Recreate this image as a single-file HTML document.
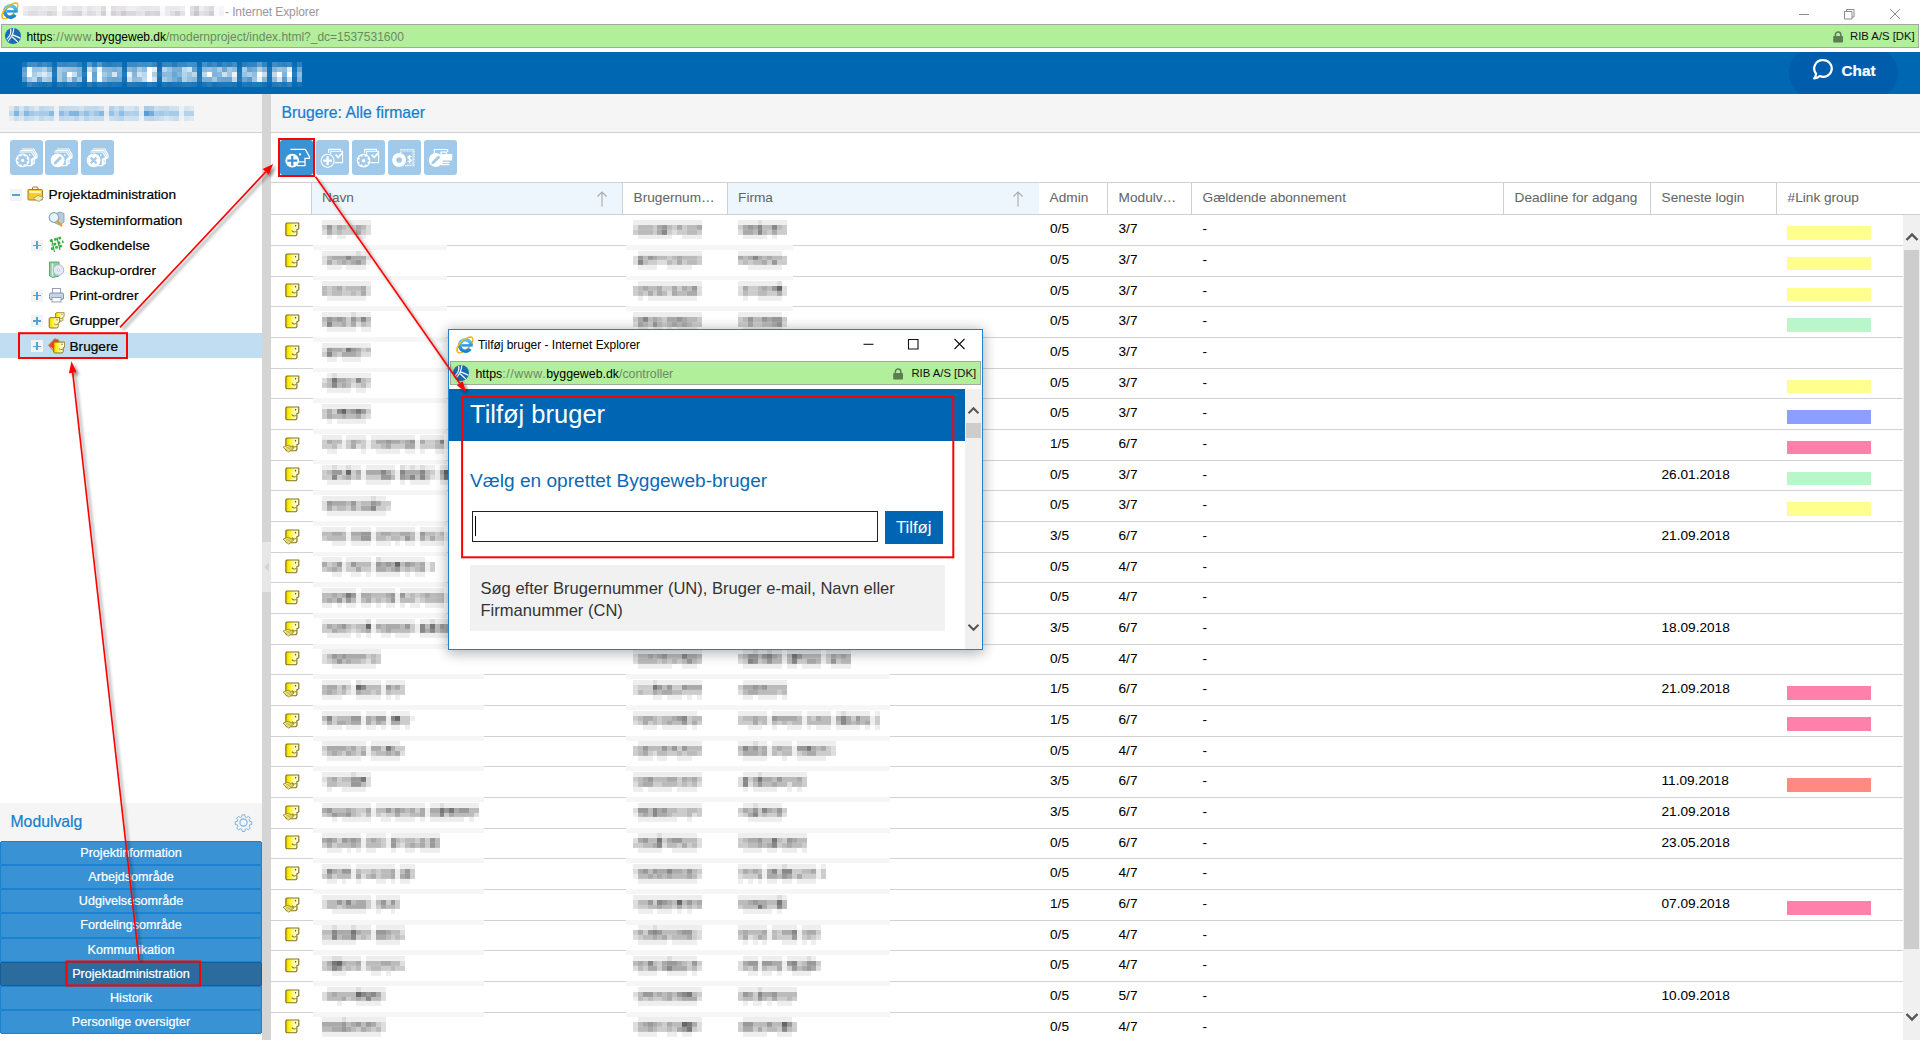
<!DOCTYPE html>
<html lang="da">
<head>
<meta charset="utf-8">
<title>Byggeweb - Brugere</title>
<style>
html,body{margin:0;padding:0;}
body{width:1920px;height:1040px;overflow:hidden;background:#fff;position:relative;font-family:"Liberation Sans",sans-serif;font-size:13.65px;color:#000;-webkit-text-stroke:.22px;}
div,span,i,svg{position:absolute;box-sizing:border-box;}
span{white-space:nowrap;}
.mz{filter:blur(.5px);}
/* ---------- IE chrome ---------- */
#tbar{left:0;top:0;width:1920px;height:24px;background:#fff;}
#tbar,#addr,#pop{-webkit-text-stroke:0;}
#rows,.gh{-webkit-text-stroke:.06px;}
#ttl{left:225px;top:3px;font-size:12px;line-height:18px;color:#9a969c;letter-spacing:-.1px;}
#addr{left:1px;top:24px;width:1918px;height:24px;background:#b1ef9b;border:1px solid #a3a8a0;}
.url{font-size:12px;line-height:16px;color:#6c8a62;}
.url b{font-weight:normal;color:#000;}
.url u{text-decoration:none;letter-spacing:.6px;}
#addr .url{left:24.400px;top:3.900px;}
.rib{font-size:11.3px;line-height:16px;color:#111;}
#addr .rib{left:1848px;top:3px;}
/* ---------- app header ---------- */
#hdr{left:0;top:52px;width:1920px;height:42px;background:#0067b2;overflow:hidden;}
#chat{left:1789px;top:-4px;width:109px;height:50px;border-radius:25px;background:#005dab;}
#chat span{left:52.5px;top:13px;font-size:15.3px;font-weight:bold;color:#fff;line-height:20px;}
/* ---------- left panel ---------- */
#lp{left:0;top:94px;width:262px;height:946px;background:#fff;}
.phd{left:0;top:0;height:39px;background:#f5f5f5;border-bottom:1px solid #d0d0d0;}
.ptt{font-size:15.75px;color:#157fcc;line-height:20px;}
.tb{width:33px;height:34.4px;top:46.3px;border-radius:3px;background:#a0c9ea;}
.tb svg{left:0;top:0;width:33.4px;height:34.4px;}
.tr{left:0;width:262px;height:25.2px;}
.tr span{top:4.6px;line-height:18px;}
.ex{width:11.6px;height:11.6px;background:#f3f3f3;top:7.4px;}
.ex:before{content:"";position:absolute;left:1.9px;top:5.2px;width:7.8px;height:1.25px;background:#4ba5d9;}
.ex.pl:after{content:"";position:absolute;left:5.2px;top:1.9px;width:1.25px;height:7.8px;background:#4ba5d9;}
.ti{width:17px;height:17px;top:4px;}
#mvh{left:0;top:709px;width:262px;height:38px;background:#f5f5f5;}
.mb{left:0;width:262px;height:24.15px;background:#3892d4;border:1px solid #1b82d1;border-radius:2px;color:#fff;text-align:center;line-height:22px;font-size:12.6px;}
.mb.sel{background:#2b6c9f;border-color:#125f99;}
/* ---------- splitter ---------- */
#spl{left:262px;top:94px;width:9px;height:946px;background:#d5d5d5;}
/* ---------- main ---------- */
#mp{left:271px;top:94px;width:1649px;height:946px;background:#fff;overflow:hidden;}
#mp .phd{width:1649px;}
.gh{top:88px;height:33px;border-top:1px solid #d0d0d0;border-bottom:1px solid #d0d0d0;left:0;width:1649px;background:#fff;}
.hc{top:0;height:31px;border-right:1px solid #d0d0d0;}
.hc span{left:10.6px;top:6px;line-height:18px;color:#666;}
.hc.s{background:#eef6fd;}
.row{left:0;width:1632px;height:30.67px;border-bottom:1px solid #d2d2d2;}
#rows{left:0;top:0;width:1632px;height:946px;}
#rows .row{margin-top:-94px;}
.ric{left:14px;top:6.5px;width:15px;height:15px;overflow:visible;}
.c{top:5px;line-height:18px;}
.lg{left:1516px;top:10.8px;width:84px;height:13.6px;}
.cv{top:29.6px;height:4.8px;background:#f6f6f6}
/* scrollbars */
.sbt{background:#f0f0f0;}
.sbh{background:#cdcdcd;}
/* ---------- popup ---------- */
#pop{left:448px;top:329px;width:535px;height:321px;background:#fff;border:1px solid #1883d7;box-shadow:0 1px 12px 1px rgba(0,0,0,.22),0 4px 14px rgba(0,0,0,.12);overflow:hidden;}
#pttl{left:29px;top:6px;font-size:11.95px;line-height:18px;color:#000;}
#paddr{left:.9px;top:31.4px;width:531px;height:23.6px;background:#b1ef9b;border:1px solid #a3a8a0;}
#paddr .url{left:24.600px;top:3.200px;font-size:12.35px;}
#paddr .rib{left:460.5px;top:3px;}
#pbh{left:0;top:58.7px;width:516px;height:52.3px;background:#0066b3;}
#pbh span{left:21px;top:9.6px;font-size:25.5px;line-height:32px;color:#fff;}
#psub{left:21px;top:138px;font-size:19.1px;line-height:26px;color:#0a69b5;}
#pin{left:23px;top:180.7px;width:405.5px;height:31px;border:1.5px solid #222;background:#fff;}
#pbtn{left:436px;top:180.7px;width:57.5px;height:33px;background:#0066b3;color:#fff;font-size:16.8px;line-height:33px;text-align:center;}
#phelp{left:21px;top:234.8px;width:475px;height:66px;background:#f1f1f1;}
#phelp span{left:10.5px;top:13.4px;font-size:16.55px;line-height:22px;color:#333;white-space:normal;width:450px;}
#psb{left:516px;top:58.7px;width:17px;height:262px;}
/* ---------- annotations ---------- */
#ann{left:0;top:0;width:1920px;height:1040px;pointer-events:none;}
</style>
</head>
<body>
<svg width="0" height="0" style="position:absolute">
<defs>
<linearGradient id="gy" x1="0" x2="1" y1="0" y2="0"><stop offset="0" stop-color="#f2c400"/><stop offset=".22" stop-color="#ffee00"/><stop offset=".62" stop-color="#fffcae"/><stop offset="1" stop-color="#fffff4"/></linearGradient>
<g id="usr">
<path d="M2 1.100H14.700V7.300L12.700 8.300V13.400L11.500 14.700H1.900L.9 13.700V2.100Z" fill="url(#gy)" stroke="#85741a" stroke-width="1.250" stroke-linejoin="round"/>
<rect x="10.600" y="3.100" width="1.300" height="1.700" fill="#6f6014"/>
<path d="M7.300 9.300Q9.300 11.700 12 10" fill="none" stroke="#8f7f22" stroke-width="1.150"/>
</g>
<g id="uadm">
<use href="#usr"/>
<path d="M-2.200 10.800 L3.400 8.800 L9.600 11.600 L4 16.200 Z" fill="#f4eb8a" stroke="#9a8a28" stroke-width=".9" stroke-linejoin="round"/>
<path d="M1 12 L5 10.2 M2.6 13 L6.6 11 M4 14 L8 12" stroke="#a39430" stroke-width=".7"/>
</g>
<g id="iee">
<ellipse cx="10" cy="11" rx="10.200" ry="4.300" transform="rotate(-44 10 11)" fill="none" stroke="#f0a800" stroke-width="1.200"/>
<path d="M15.100 14.700A5.700 5.700 0 1 1 16.100 11.300" fill="none" stroke="url(#ieg)" stroke-width="3.500"/>
<path d="M17.700 11.400H6.500" stroke="#2c9ade" stroke-width="2.500"/>
<path d="M2.600 17.600C.3 13.800 5.600 6.400 12 3.800 14.500 2.800 16.800 2.700 17.700 3.700" fill="none" stroke="#f7bc0a" stroke-width="1.350"/>
</g>
<linearGradient id="ieg" x1="0" y1="0" x2="0" y2="1"><stop offset="0" stop-color="#5cc3f2"/><stop offset="1" stop-color="#1a82c6"/></linearGradient>
<g id="bw">
<circle cx="8" cy="8" r="8" fill="#1a6cb5"/>
<path d="M5.600 .8C6.700 4.200 6 7.200 1.700 11.300M8.800 .3C8.600 4.600 7 8.800 2.900 13.400M7.600 6.900C10.200 7.600 12.800 9 15.400 10.200M7.100 8.700C9.200 10.400 11 12.200 12.800 14.200" fill="none" stroke="#fff" stroke-width="1.150"/>
</g>
<g id="lock"><path d="M2.4 5.2V3.6a2.7 2.7 0 0 1 5.4 0v1.6" fill="none" stroke="#5b7d51" stroke-width="1.5"/><rect x=".2" y="5" width="9.8" height="6.6" rx=".8" fill="#5b7d51"/></g>

<g id="heads" fill="none" stroke="#fff" stroke-width="1.15">
<path d="M12 9H23.8L27 14.600V17.600H24.200V23.500H22.600"/>
<path d="M10.400 10.500H22.600L25.800 15.600V18.400H22.800V24.600H21.400"/>
<path d="M9.200 12H21.400L24.600 16.600V19.400H21.400V25.600H16"/>
<path d="M19.800 14v2.200" stroke-width="1"/>
</g>
<g id="gear"><circle r="3.300" fill="none" stroke-width="2.300"/><path d="M0-5.600V5.600M-5.600 0H5.600M-4-4L4 4M-4 4L4-4" stroke-width="1.700"/></g>
<g id="icA"><use href="#heads"/><circle cx="12.600" cy="20.400" r="6.900" fill="#fff"/><g transform="translate(12.600,20.400)" stroke="#a0c9ea"><use href="#gear"/></g><circle cx="12.600" cy="20.400" r="1.700" fill="#fff"/></g>
<g id="icB"><use href="#heads"/><circle cx="12.600" cy="20.400" r="6.900" fill="#fff"/><path d="M8.700 24.400l.5-2.300 5.800-5.800 1.900 1.900-5.800 5.800z" fill="#a0c9ea"/></g>
<g id="icC"><use href="#heads"/><circle cx="12.600" cy="20.400" r="6.900" fill="#fff"/><path d="M9.700 17.500l5.800 5.800M15.500 17.500l-5.800 5.800" stroke="#a0c9ea" stroke-width="2.200"/></g>
<g id="icD"><path d="M10.400 9.400h15l4 7.200v1.700h-4.400v7.400h-8" fill="none" stroke="#fff" stroke-width="1.300"/><path d="M18.500 21.900h6.500" stroke="#fff" stroke-width="1.200"/><circle cx="20" cy="14.400" r="1.100" fill="#fff"/><circle cx="12.250" cy="20.700" r="6.900" fill="#fff"/><path d="M12.250 15.700v10M7.250 20.700h10" stroke="#3892d4" stroke-width="2.200"/></g>
<g id="docs" fill="none" stroke="#fff" stroke-width="1.100"><path d="M12.700 13v-3.600h11.900v1.900"/><path d="M14.700 14.500v-3.200h11.900v11.300h-8"/><path d="M19.600 14.700l2.500 2.700 4.300-4.600" stroke-width="1.700"/></g>
<g id="icE"><use href="#docs"/><circle cx="11.600" cy="20.700" r="6.500" fill="#a0c9ea" stroke="#fff" stroke-width="1.100"/><path d="M11.600 16.300v8.800M7.200 20.700h8.800" stroke="#fff" stroke-width="2.300"/></g>
<g id="icF"><use href="#docs"/><circle cx="11.600" cy="20.700" r="6.900" fill="#fff"/><g transform="translate(11.600,20.700)" stroke="#a0c9ea"><use href="#gear"/></g><circle cx="11.600" cy="20.700" r="1.700" fill="#fff"/></g>
<g id="icG"><path d="M12.900 13v-3.300h13v16h-9" fill="none" stroke="#fff" stroke-width="1.300" stroke-dasharray="1 .6"/><path d="M14.300 11.200h10.400v13h-6" fill="none" stroke="#fff" stroke-width=".8" opacity=".6"/><path d="M21.600 15v8.300M23.300 17c-.6-1-3.400-1-3.400.5s3.400 1.300 3.400 2.900-2.800 1.700-3.500.5" fill="none" stroke="#fff" stroke-width="1.200"/><circle cx="11.100" cy="20" r="4.900" fill="none" stroke="#fff" stroke-width="4.200"/></g>
<g id="icH"><path d="M10.300 13.500v-4h13.300v2.400" fill="none" stroke="#fff" stroke-width="1.200"/><path d="M16.400 11.400h6.700v2.700h5.100v6.500h-11.800z" fill="#fff"/><path d="M17.800 12.700h4v1.500h-4z" fill="#a0c9ea"/><path d="M17 22.500h8.500M17 24.700h8.500" stroke="#fff" stroke-width="1.300"/><circle cx="11.750" cy="20" r="7" fill="#fff"/><path d="M7.400 24.300l.6-2.500 6.300-6.300 2 2-6.300 6.300z" fill="#a0c9ea"/></g>
</defs>
</svg>

<!-- IE title bar -->
<div id="tbar">
<svg style="left:0;top:0;width:20px;height:20px" viewBox="0 0 20 20"><use href="#iee"/></svg>
<div class="mz " style="left:23px;top:6px;width:200.9px;height:9.8px;background:linear-gradient(90deg,#efeef1 0 4.9px,#e8e7ea 0 9.8px,#e6e5e8 0 14.7px,#e8e7ea 0 19.6px,#ebeaed 0 24.5px,#e8e7ea 0 29.4px,#e7e6e9 0 34.3px,#fff 0 39.2px,#e9e8eb 0 44.1px,#efeef0 0 49.0px,#e6e5e8 0 58.8px,#f1f0f2 0 63.7px,#e4e3e6 0 68.6px,#eae9ec 0 73.5px,#edecef 0 78.4px,#dddce0 0 83.3px,#fff 0 88.2px,#e0dee2 0 93.1px,#e6e5e8 0 98.0px,#e4e3e6 0 102.9px,#eeedf0 0 107.8px,#efeef0 0 112.7px,#eae9ec 0 117.6px,#e7e6e9 0 127.4px,#e9e8eb 0 137.2px,#fafafb 0 142.1px,#ebebed 0 147.0px,#e9e8eb 0 151.9px,#eae9ec 0 156.8px,#efeff1 0 161.7px,#fff 0 166.6px,#e0dfe3 0 171.5px,#d2d0d6 0 176.4px,#eeeef0 0 181.3px,#e4e3e6 0 186.2px,#dad9de 0 191.1px,#fafafb 0 196.0px,#f7f6f7 0 200.9px) 0 0.0px/100% 4.9px no-repeat,linear-gradient(90deg,#e8e7ea 0 4.9px,#dfdde2 0 14.7px,#e4e3e7 0 19.6px,#e3e2e6 0 24.5px,#d7d5da 0 29.4px,#dedde1 0 34.3px,#f8f7f8 0 39.2px,#e1e0e4 0 44.1px,#dfdde1 0 49.0px,#d8d6db 0 53.9px,#d4d2d8 0 58.8px,#eae9ec 0 63.7px,#dcdbdf 0 68.6px,#e0dfe3 0 73.5px,#e9e8eb 0 78.4px,#d2d0d6 0 83.3px,#f8f7f8 0 88.2px,#d3d1d7 0 93.1px,#dcdbdf 0 98.0px,#cdcad1 0 102.9px,#dad8dd 0 112.7px,#e1e0e4 0 117.6px,#e5e4e7 0 122.5px,#d4d2d7 0 127.4px,#d9d7dc 0 132.3px,#d6d4d9 0 137.2px,#f8f8f9 0 142.1px,#ebeaed 0 147.0px,#dedce1 0 151.9px,#d1cfd5 0 156.8px,#e3e2e6 0 161.7px,#fff 0 166.6px,#dddbe0 0 171.5px,#c8c5cd 0 176.4px,#e2e1e5 0 181.3px,#dcdbdf 0 186.2px,#ceccd3 0 191.1px,#f9f9fa 0 196.0px,#f2f1f3 0 200.9px) 0 4.9px/100% 4.9px no-repeat"></div>
<span id="ttl">- Internet Explorer</span>
<svg style="left:1790px;top:4px;width:120px;height:20px" viewBox="0 0 120 20"><g fill="none" stroke="#8c8c8c" stroke-width="1"><path d="M9 10.5h10"/><path d="M54.5 7.5h7.5v7.5h-7.5zM56.5 7.5v-2h7.5v7.5h-2"/><path d="M100 5l10 10M110 5l-10 10"/></g></svg>
</div>
<div id="addr">
<svg style="left:2.600px;top:3px;width:16px;height:16px" viewBox="0 0 16 16"><use href="#bw"/></svg>
<span class="url"><b>https</b><u>://www.</u><b>byggeweb.dk</b>/modernproject/index.html?_dc=1537531600</span>
<svg style="left:1830.5px;top:6.3px;width:10.2px;height:12px" viewBox="0 0 10.2 12"><use href="#lock"/></svg>
<span class="rib">RIB A/S [DK]</span>
</div>

<!-- app header -->
<div id="hdr">
<div id="chat">
<svg style="left:22px;top:9px;width:24px;height:26px" viewBox="0 0 24 26"><path d="M12.5 3.2a8.3 8.3 0 1 1-3.6 15.8c-1.4 1.3-3.3 2.3-5.8 2.5 1.3-1.5 1.9-3.1 2-4.8A8.3 8.3 0 0 1 12.5 3.2z" fill="none" stroke="#fff" stroke-width="2.2" stroke-linejoin="round"/></svg>
<span>Chat</span>
</div>
</div>
<div class="mz " style="left:22px;top:61.5px;width:280.0px;height:25.0px;background:linear-gradient(90deg,#1875b9 0 5.0px,#418ec6 0 10.0px,#428ec6 0 15.0px,#2f83c0 0 20.0px,#3f8dc5 0 25.0px,#3184c1 0 30.0px,#0b6eb5 0 35.0px,#3b8ac4 0 40.0px,#3586c2 0 45.0px,#3b8ac4 0 50.0px,#3a8ac4 0 55.0px,#287fbe 0 60.0px,#0c6eb6 0 65.0px,#579bcc 0 70.0px,#2980bf 0 75.0px,#569acc 0 80.0px,#2d82c0 0 85.0px,#257dbd 0 90.0px,#2d82c0 0 95.0px,#3184c1 0 100.0px,#076bb4 0 105.0px,#3d8bc4 0 110.0px,#3b8ac4 0 115.0px,#438fc6 0 120.0px,#418ec6 0 125.0px,#4791c7 0 130.0px,#3687c2 0 135.0px,#0b6db5 0 140.0px,#3285c1 0 145.0px,#3788c2 0 150.0px,#257dbd 0 155.0px,#3888c3 0 165.0px,#4590c7 0 170.0px,#3e8cc5 0 175.0px,#096cb5 0 180.0px,#4490c7 0 185.0px,#2e82c0 0 190.0px,#3b8ac4 0 195.0px,#247cbd 0 200.0px,#3788c3 0 205.0px,#2d82c0 0 210.0px,#418ec6 0 215.0px,#096cb5 0 220.0px,#297fbe 0 225.0px,#2f83c0 0 230.0px,#3285c1 0 235.0px,#5b9dcd 0 240.0px,#3084c1 0 245.0px,#076bb4 0 250.0px,#418ec6 0 255.0px,#3587c2 0 260.0px,#3083c0 0 265.0px,#3989c3 0 270.0px,#086cb5 0 275.0px,#2980be 0 280.0px) 0 0.0px/100% 5px no-repeat,linear-gradient(90deg,#5f9fcf 0 5.0px,#f3f8fb 0 10.0px,#9ac3e1 0 15.0px,#9bc4e1 0 20.0px,#afcfe7 0 25.0px,#7eb2d8 0 30.0px,#1c78ba 0 35.0px,#a8cbe5 0 40.0px,#9bc3e1 0 45.0px,#94bfdf 0 50.0px,#8ebcdd 0 55.0px,#7db2d8 0 60.0px,#1574b8 0 65.0px,#cee2f0 0 70.0px,#82b5d9 0 75.0px,#ebf3f9 0 80.0px,#86b7db 0 85.0px,#82b5d9 0 90.0px,#76aed6 0 95.0px,#84b6da 0 100.0px,#1674b9 0 105.0px,#8ab9dc 0 110.0px,#76add6 0 115.0px,#a6cae4 0 120.0px,#8fbddd 0 125.0px,#fff 0 130.0px,#dfecf5 0 135.0px,#1875b9 0 140.0px,#b6d3e9 0 145.0px,#99c2e0 0 150.0px,#77aed6 0 155.0px,#76aed6 0 160.0px,#bdd8eb 0 165.0px,#cfe3f1 0 170.0px,#64a2d0 0 175.0px,#1976ba 0 180.0px,#88b8db 0 185.0px,#94bfdf 0 190.0px,#84b6da 0 195.0px,#a8cbe5 0 200.0px,#6fa9d3 0 205.0px,#a3c8e3 0 210.0px,#8ebcdd 0 215.0px,#1473b8 0 220.0px,#a8cbe5 0 225.0px,#65a3d0 0 230.0px,#73acd5 0 235.0px,#b1d0e7 0 240.0px,#7fb3d8 0 245.0px,#1674b9 0 250.0px,#83b5d9 0 255.0px,#99c2e0 0 260.0px,#8fbcdd 0 265.0px,#dae9f4 0 270.0px,#1876b9 0 275.0px,#6da8d3 0 280.0px) 0 5.0px/100% 5px no-repeat,linear-gradient(90deg,#70aad4 0 5.0px,#fff 0 10.0px,#abcde6 0 15.0px,#c8deee 0 20.0px,#dae9f4 0 25.0px,#b8d5ea 0 30.0px,#207abc 0 35.0px,#a9cce5 0 40.0px,#80b3d9 0 45.0px,#fff 0 50.0px,#c7deee 0 55.0px,#7db2d8 0 60.0px,#287fbe 0 65.0px,#fff 0 70.0px,#64a3d0 0 75.0px,#fff 0 80.0px,#a5cae4 0 85.0px,#8abadc 0 90.0px,#d3e5f2 0 95.0px,#7cb1d8 0 100.0px,#207abc 0 105.0px,#e6f0f7 0 110.0px,#86b7da 0 115.0px,#d0e3f1 0 120.0px,#bad6ea 0 125.0px,#fff 0 130.0px,#adcee6 0 135.0px,#247dbd 0 140.0px,#8bbadc 0 145.0px,#8dbbdd 0 150.0px,#6aa6d2 0 155.0px,#82b4d9 0 160.0px,#b5d3e9 0 165.0px,#9ec5e2 0 170.0px,#bcd7eb 0 175.0px,#1976ba 0 180.0px,#bed8eb 0 185.0px,#fdfefe 0 190.0px,#80b3d9 0 195.0px,#88b8db 0 200.0px,#cce1f0 0 205.0px,#9fc6e2 0 210.0px,#e9f2f8 0 215.0px,#1d79bb 0 220.0px,#98c2e0 0 225.0px,#abcde6 0 230.0px,#93bfdf 0 235.0px,#fff 0 240.0px,#c5ddee 0 245.0px,#1b77ba 0 250.0px,#c0daec 0 255.0px,#fff 0 260.0px,#7fb3d8 0 265.0px,#fff 0 270.0px,#257dbd 0 275.0px,#90bddd 0 280.0px) 0 10.0px/100% 5px no-repeat,linear-gradient(90deg,#5298cb 0 5.0px,#a4c9e4 0 10.0px,#bdd8eb 0 15.0px,#64a3d0 0 20.0px,#aecfe7 0 25.0px,#a0c6e2 0 30.0px,#1775b9 0 35.0px,#a6cae4 0 40.0px,#7bb0d7 0 45.0px,#c0d9ec 0 50.0px,#6fa9d4 0 55.0px,#a1c7e3 0 60.0px,#1875b9 0 65.0px,#f8fbfd 0 70.0px,#6ba7d2 0 75.0px,#f9fcfd 0 80.0px,#8ab9dc 0 85.0px,#6fa9d4 0 90.0px,#68a5d1 0 95.0px,#6ca7d3 0 100.0px,#1473b8 0 105.0px,#cadfef 0 110.0px,#8ebcdd 0 115.0px,#95c0df 0 120.0px,#c5dced 0 125.0px,#fff 0 130.0px,#d3e5f2 0 135.0px,#1473b8 0 140.0px,#a7cbe4 0 145.0px,#92bede 0 150.0px,#73acd5 0 155.0px,#5e9fce 0 160.0px,#b0d0e7 0 165.0px,#96c0df 0 170.0px,#88b8db 0 175.0px,#1e79bb 0 180.0px,#7cb1d7 0 185.0px,#7bb1d7 0 190.0px,#a0c6e2 0 195.0px,#71aad4 0 200.0px,#69a6d2 0 205.0px,#67a4d1 0 210.0px,#c0d9ec 0 215.0px,#1d78bb 0 220.0px,#6ca7d3 0 225.0px,#579bcc 0 230.0px,#9ec5e2 0 235.0px,#e8f1f8 0 240.0px,#87b8db 0 245.0px,#1473b8 0 250.0px,#8fbcdd 0 255.0px,#d2e4f2 0 260.0px,#5d9ece 0 265.0px,#cae0ef 0 270.0px,#1373b8 0 275.0px,#81b4d9 0 280.0px) 0 15.0px/100% 5px no-repeat,linear-gradient(90deg,#0b6eb5 0 5.0px,#3285c1 0 10.0px,#227bbc 0 15.0px,#1b77ba 0 20.0px,#1573b8 0 25.0px,#1e79bb 0 30.0px,#056ab3 0 35.0px,#1c78ba 0 40.0px,#1373b8 0 45.0px,#207abc 0 50.0px,#217bbc 0 55.0px,#1372b8 0 60.0px,#066bb4 0 65.0px,#267ebd 0 70.0px,#1272b7 0 75.0px,#227bbc 0 80.0px,#1c78bb 0 85.0px,#1674b9 0 90.0px,#1c78ba 0 95.0px,#1976ba 0 100.0px,#056ab3 0 105.0px,#207abc 0 110.0px,#1f79bb 0 115.0px,#1876b9 0 120.0px,#1574b8 0 125.0px,#247cbd 0 130.0px,#1c78bb 0 135.0px,#0469b3 0 140.0px,#1b77ba 0 145.0px,#1272b7 0 150.0px,#1976ba 0 155.0px,#1875b9 0 160.0px,#207abc 0 170.0px,#1b77ba 0 175.0px,#066ab4 0 180.0px,#1875b9 0 185.0px,#247cbd 0 190.0px,#1473b8 0 195.0px,#1976ba 0 200.0px,#1c78ba 0 210.0px,#1775b9 0 215.0px,#046ab3 0 220.0px,#1d78bb 0 225.0px,#1875b9 0 230.0px,#1f79bb 0 235.0px,#1f7abb 0 240.0px,#1473b8 0 245.0px,#0469b3 0 250.0px,#207abc 0 255.0px,#247cbd 0 260.0px,#1a77ba 0 265.0px,#2e82c0 0 270.0px,#056ab3 0 275.0px,#1473b8 0 280.0px) 0 20.0px/100% 5px no-repeat"></div>

<!-- left panel -->
<div id="lp">
<div class="phd" style="width:262px"></div>
<div class="tb" style="left:10px"><svg viewBox="0 0 33.4 34.4"><use href="#icA"/></svg></div>
<div class="tb" style="left:45.4px"><svg viewBox="0 0 33.4 34.4"><use href="#icB"/></svg></div>
<div class="tb" style="left:81.1px"><svg viewBox="0 0 33.4 34.4"><use href="#icC"/></svg></div>

<div class="tr" style="top:87.8px"><i class="ex" style="left:10.2px"></i><svg class="ti" style="left:27px" viewBox="0 0 17 17"><rect x="1" y="3.5" width="14.5" height="10.5" rx="1" fill="#f7c92c" stroke="#a87a28"/><path d="M5.5 3.5v-1.5a1 1 0 0 1 1-1h3.5a1 1 0 0 1 1 1v1.5" fill="none" stroke="#a87a28"/><rect x="2.5" y="5" width="11.5" height="2.2" fill="#fff3b0"/><path d="M6 12.5l5-3 5.5 2-4.5 4z" fill="#f3f0a8" stroke="#9a9a7a" stroke-width=".8"/></svg><span style="left:48.6px">Projektadministration</span></div>
<div class="tr" style="top:113px"><svg class="ti" style="left:48px" viewBox="0 0 17 17"><path d="M7 3l5-2 4 1.5v8.5l-4.5 3-4.5-2z" fill="#b9cdd6" stroke="#7f98a6" stroke-width=".8"/><circle cx="6" cy="6.5" r="4.8" fill="#e6f3fb" stroke="#8aa6ba" stroke-width="1.2"/><path d="M9.5 10.5l4 4" stroke="#e69a2e" stroke-width="2.2" stroke-linecap="round"/></svg><span style="left:69.5px">Systeminformation</span></div>
<div class="tr" style="top:138.2px"><i class="ex pl" style="left:31.3px"></i><svg class="ti" style="left:48px" viewBox="0 0 17 17"><g fill="none" stroke="#2eb53c" stroke-width="2.6" stroke-dasharray="2.6 1.8"><path d="M2 5l12-3.5"/><path d="M3.5 9l12-3.5" stroke-dashoffset="2.2"/><path d="M3 13l12-3.5"/></g><path d="M3.5 3l3 13M9 1.5l3 12.5" stroke="#3a9a3a" stroke-width="1.1"/></svg><span style="left:69.5px">Godkendelse</span></div>
<div class="tr" style="top:163.4px"><svg class="ti" style="left:48px" viewBox="0 0 17 17"><path d="M1.5 1h9.5v14l-6 1.5-3.5-1.5z" fill="#8ed0a6" stroke="#4aa864" stroke-width=".9"/><path d="M4.5 2.5v13" stroke="#d6efe0" stroke-width="1.6"/><circle cx="10.5" cy="9" r="5.3" fill="#e4e9f4" stroke="#a9b4cc" stroke-width=".9"/><circle cx="10.5" cy="9" r="1.3" fill="#fff" stroke="#a9b4cc" stroke-width=".6"/></svg><span style="left:69.5px">Backup-ordrer</span></div>
<div class="tr" style="top:188.6px"><i class="ex pl" style="left:31.3px"></i><svg class="ti" style="left:48px" viewBox="0 0 17 17"><rect x="4.5" y="1.5" width="8" height="5" fill="#fff" stroke="#8a97ad" stroke-width=".9"/><rect x="1.5" y="6" width="14" height="6.5" rx="1.5" fill="#c9d3e6" stroke="#7b89a6" stroke-width=".9"/><rect x="4" y="10.5" width="9" height="4.5" fill="#fff" stroke="#8a97ad" stroke-width=".9"/></svg><span style="left:69.5px">Print-ordrer</span></div>
<div class="tr" style="top:213.8px"><i class="ex pl" style="left:31.3px"></i><svg class="ti" style="left:48px" viewBox="0 0 17 17"><g transform="translate(7,0) scale(.62)"><use href="#usr"/></g><g transform="translate(.5,4.800) scale(.76)"><use href="#usr"/></g></svg><span style="left:69.5px">Grupper</span></div>
<div class="tr" style="top:239px;background:#c1ddf1;height:24.6px"><i class="ex pl" style="left:31.3px"></i><svg class="ti" style="left:48px" viewBox="0 0 17 17"><path d="M.6 8.200l6.200-6.400 4 1.400-2.500 10.800-3.800-1.200z" fill="#f04030" stroke="#b08428" stroke-width="1"/><path d="M.9 8.600l3.700 4.600 3.400.8" fill="#f6c9a0" stroke="#b08428" stroke-width=".8"/><g transform="translate(5,4.200) scale(.8)"><use href="#usr"/></g></svg><span style="left:69.5px">Brugere</span></div>

<div id="mvh"><span class="ptt" style="left:10.5px;top:8.5px">Modulvalg</span>
<svg style="left:234px;top:9.5px;width:19px;height:19px" viewBox="0 0 19 19"><g fill="none" stroke="#76b2e2" stroke-width="1.1"><path d="M8 1h3l.4 2.3 1.7.7 1.9-1.4 2.1 2.1-1.4 1.9.7 1.7 2.3.4v3l-2.3.4-.7 1.7 1.4 1.9-2.1 2.1-1.9-1.4-1.7.7-.4 2.3h-3l-.4-2.3-1.7-.7-1.9 1.4-2.1-2.1 1.4-1.9-.7-1.7-2.3-.4v-3l2.3-.4.7-1.7-1.4-1.9 2.1-2.1 1.9 1.4 1.7-.7z" transform="translate(.95,.95) scale(.9)"/><circle cx="9.5" cy="9.5" r="3.6"/></g></svg>
</div>
<div style="left:0;top:748px;width:262px;height:191px;background:#2f8bd2"></div>
<div class="mb" style="top:747px">Projektinformation</div>
<div class="mb" style="top:771.15px">Arbejdsområde</div>
<div class="mb" style="top:795.3px">Udgivelsesområde</div>
<div class="mb" style="top:819.45px">Fordelingsområde</div>
<div class="mb" style="top:843.6px">Kommunikation</div>
<div class="mb sel" style="top:867.75px">Projektadministration</div>
<div class="mb" style="top:891.9px">Historik</div>
<div class="mb" style="top:916.05px">Personlige oversigter</div>
</div>
<div class="mz " style="left:9px;top:106px;width:185.0px;height:15.0px;background:linear-gradient(90deg,#dde8f1 0 5.0px,#b4d2ea 0 10.0px,#d7e5f0 0 15.0px,#b5d3ea 0 20.0px,#cbdfee 0 25.0px,#dce7f1 0 30.0px,#bfd8ec 0 35.0px,#c5dbed 0 40.0px,#cde0ee 0 45.0px,#eef1f4 0 50.0px,#c1d9ec 0 55.0px,#c6dced 0 60.0px,#c7dded 0 65.0px,#c8dded 0 70.0px,#d3e3ef 0 75.0px,#bfd8ec 0 80.0px,#c0d9ec 0 85.0px,#bdd7eb 0 90.0px,#ccdfee 0 95.0px,#edf0f4 0 100.0px,#b3d1ea 0 105.0px,#c8dded 0 110.0px,#b5d3ea 0 115.0px,#dae7f0 0 120.0px,#d7e5f0 0 125.0px,#c8dded 0 130.0px,#eff2f4 0 135.0px,#a8cce8 0 140.0px,#adcfe9 0 145.0px,#cadeee 0 150.0px,#c4dbed 0 155.0px,#c3daed 0 160.0px,#d1e2ef 0 165.0px,#d0e1ef 0 170.0px,#edf0f4 0 175.0px,#d5e4f0 0 180.0px,#dee9f1 0 185.0px) 0 0.0px/100% 5px no-repeat,linear-gradient(90deg,#c3daec 0 5.0px,#80b6e1 0 10.0px,#c0d9ec 0 15.0px,#86b9e2 0 20.0px,#a0c8e7 0 25.0px,#afcfe9 0 30.0px,#a6cae7 0 35.0px,#a8cce8 0 40.0px,#88bae2 0 45.0px,#e8eef3 0 50.0px,#8dbde3 0 55.0px,#adcee9 0 60.0px,#81b7e1 0 65.0px,#7db4e0 0 70.0px,#adcee9 0 75.0px,#93c0e4 0 80.0px,#b0d0e9 0 85.0px,#9dc6e6 0 90.0px,#86b9e2 0 95.0px,#e4ecf2 0 100.0px,#96c2e5 0 105.0px,#bad5eb 0 110.0px,#8ebee3 0 115.0px,#b0d0e9 0 120.0px,#b4d2ea 0 125.0px,#aecfe9 0 130.0px,#e4ecf2 0 135.0px,#549fda 0 140.0px,#71aede 0 145.0px,#a9cce8 0 150.0px,#a1c8e7 0 155.0px,#afd0e9 0 160.0px,#a7cbe8 0 165.0px,#a8cce8 0 170.0px,#e7eef3 0 175.0px,#b4d2ea 0 185.0px) 0 5.0px/100% 5px no-repeat,linear-gradient(90deg,#e5ecf2 0 5.0px,#cadeee 0 10.0px,#dae7f0 0 15.0px,#bed8ec 0 20.0px,#cbdeee 0 25.0px,#d5e4f0 0 30.0px,#c3daec 0 35.0px,#cfe1ef 0 40.0px,#c7dced 0 45.0px,#edf1f4 0 50.0px,#bfd8ec 0 55.0px,#c4dbed 0 60.0px,#c9dded 0 65.0px,#bad5eb 0 70.0px,#d3e3ef 0 75.0px,#bad5eb 0 80.0px,#c8dded 0 85.0px,#c2daec 0 90.0px,#c5dbed 0 95.0px,#eef1f4 0 100.0px,#ccdfee 0 105.0px,#c4dbed 0 110.0px,#b9d5eb 0 115.0px,#d0e1ef 0 120.0px,#cee0ee 0 125.0px,#ccdfee 0 130.0px,#eef1f4 0 135.0px,#bfd8ec 0 140.0px,#b9d5eb 0 145.0px,#c5dbed 0 150.0px,#ccdfee 0 155.0px,#d8e6f0 0 160.0px,#cfe1ef 0 165.0px,#c7dced 0 170.0px,#eff2f4 0 175.0px,#d8e5f0 0 180.0px,#dfe9f1 0 185.0px) 0 10.0px/100% 5px no-repeat"></div>

<div id="spl"><div style="left:0;top:448.300px;width:9px;height:49.300px;background:#e7e7e7"></div><svg style="left:1.600px;top:467px;width:5px;height:12px" viewBox="0 0 5 12"><path d="M4.800 1.500L.3 6l4.500 4.500z" fill="#d2d2d2"/></svg></div>

<!-- main panel -->
<div id="mp">
<div class="phd"><span class="ptt" style="left:10.5px;top:8.5px">Brugere: Alle firmaer</span></div>
<div class="tb" style="left:9.3px;background:#3892d4"><svg viewBox="0 0 33.4 34.4"><use href="#icD"/></svg></div>
<div class="tb" style="left:45.2px"><svg viewBox="0 0 33.4 34.4"><use href="#icE"/></svg></div>
<div class="tb" style="left:81px"><svg viewBox="0 0 33.4 34.4"><use href="#icF"/></svg></div>
<div class="tb" style="left:116.8px"><svg viewBox="0 0 33.4 34.4"><use href="#icG"/></svg></div>
<div class="tb" style="left:152.6px"><svg viewBox="0 0 33.4 34.4"><use href="#icH"/></svg></div>

<div id="rows">
<div class="row" style="top:215.40px">
<svg class="ric" viewBox="0 0 16 16"><use href="#usr"/></svg>
<i class="cv" style="left:42px;width:134px"></i><i class="cv" style="left:355px;width:167px"></i>
<div class="mz " style="left:51px;top:4.5px;width:49.0px;height:19.6px;background:linear-gradient(90deg,#eee 0 49.0px) 0 0.0px/100% 4.9px no-repeat,linear-gradient(90deg,#ccc 0 4.9px,#999 0 9.8px,#ccc 0 14.7px,#aaa 0 19.6px,#bbb 0 24.5px,#ccc 0 34.3px,#aaa 0 39.2px,#bbb 0 44.1px,#ddd 0 49.0px) 0 4.9px/100% 4.9px no-repeat,linear-gradient(90deg,#ddd 0 4.9px,#aaa 0 9.8px,#ccc 0 14.7px,#bbb 0 19.6px,#ccc 0 34.3px,#aaa 0 39.2px,#ccc 0 44.1px,#ddd 0 49.0px) 0 9.8px/100% 4.9px no-repeat,linear-gradient(90deg,#fff 0 4.9px,#eee 0 9.8px,#fff 0 14.7px,#eee 0 24.5px,#fff 0 34.3px,#eee 0 44.1px,#fff 0 49.0px) 0 14.7px/100% 4.9px no-repeat"></div>
<div class="mz " style="left:362px;top:4.5px;width:68.6px;height:19.6px;background:linear-gradient(90deg,#eee 0 68.6px) 0 0.0px/100% 4.9px no-repeat,linear-gradient(90deg,#ddd 0 4.9px,#bbb 0 19.6px,#ccc 0 24.5px,#aaa 0 29.4px,#999 0 34.3px,#bbb 0 39.2px,#ccc 0 44.1px,#aaa 0 49.0px,#ccc 0 53.9px,#bbb 0 63.7px,#aaa 0 68.6px) 0 4.9px/100% 4.9px no-repeat,linear-gradient(90deg,#ccc 0 4.9px,#bbb 0 19.6px,#ccc 0 24.5px,#aaa 0 29.4px,#888 0 34.3px,#ccc 0 39.2px,#ddd 0 44.1px,#ccc 0 53.9px,#bbb 0 63.7px,#ccc 0 68.6px) 0 9.8px/100% 4.9px no-repeat,linear-gradient(90deg,#fff 0 4.9px,#eee 0 39.2px,#fff 0 49.0px,#eee 0 68.6px) 0 14.7px/100% 4.9px no-repeat"></div>
<div class="mz " style="left:467px;top:4.5px;width:49.0px;height:19.6px;background:linear-gradient(90deg,#eee 0 19.6px,#ddd 0 24.5px,#eee 0 49.0px) 0 0.0px/100% 4.9px no-repeat,linear-gradient(90deg,#ccc 0 4.9px,#aaa 0 9.8px,#999 0 14.7px,#aaa 0 19.6px,#888 0 24.5px,#bbb 0 34.3px,#888 0 39.2px,#bbb 0 44.1px,#ccc 0 49.0px) 0 4.9px/100% 4.9px no-repeat,linear-gradient(90deg,#ddd 0 4.9px,#aaa 0 14.7px,#bbb 0 19.6px,#888 0 24.5px,#bbb 0 29.4px,#ccc 0 34.3px,#aaa 0 39.2px,#ccc 0 49.0px) 0 9.8px/100% 4.9px no-repeat,linear-gradient(90deg,#fff 0 4.9px,#eee 0 29.4px,#fff 0 34.3px,#eee 0 39.2px,#fff 0 49.0px) 0 14.7px/100% 4.9px no-repeat"></div>
<span class="c" style="left:779px">0/5</span><span class="c" style="left:847.5px">3/7</span><span class="c" style="left:931.5px">-</span>
<i class="lg" style="background:#ffff8d"></i>
</div>
<div class="row" style="top:246.07px">
<svg class="ric" viewBox="0 0 16 16"><use href="#usr"/></svg>
<i class="cv" style="left:42px;width:134px"></i><i class="cv" style="left:355px;width:167px"></i>
<div class="mz " style="left:51px;top:4.5px;width:49.0px;height:19.6px;background:linear-gradient(90deg,#eee 0 34.3px,#ddd 0 39.2px,#eee 0 49.0px) 0 0.0px/100% 4.9px no-repeat,linear-gradient(90deg,#ddd 0 4.9px,#bbb 0 9.8px,#aaa 0 24.5px,#888 0 29.4px,#aaa 0 44.1px,#ddd 0 49.0px) 0 4.9px/100% 4.9px no-repeat,linear-gradient(90deg,#ddd 0 4.9px,#aaa 0 9.8px,#ccc 0 14.7px,#bbb 0 19.6px,#aaa 0 24.5px,#bbb 0 29.4px,#aaa 0 34.3px,#999 0 39.2px,#bbb 0 44.1px,#eee 0 49.0px) 0 9.8px/100% 4.9px no-repeat,linear-gradient(90deg,#fff 0 4.9px,#eee 0 19.6px,#fff 0 24.5px,#eee 0 44.1px,#fff 0 49.0px) 0 14.7px/100% 4.9px no-repeat"></div>
<div class="mz " style="left:362px;top:4.5px;width:68.6px;height:19.6px;background:linear-gradient(90deg,#fff 0 4.9px,#eee 0 68.6px) 0 0.0px/100% 4.9px no-repeat,linear-gradient(90deg,#ddd 0 4.9px,#999 0 9.8px,#bbb 0 14.7px,#999 0 19.6px,#aaa 0 24.5px,#bbb 0 34.3px,#ccc 0 39.2px,#bbb 0 44.1px,#aaa 0 49.0px,#bbb 0 63.7px,#ccc 0 68.6px) 0 4.9px/100% 4.9px no-repeat,linear-gradient(90deg,#ddd 0 4.9px,#888 0 9.8px,#bbb 0 14.7px,#ccc 0 24.5px,#ddd 0 34.3px,#bbb 0 39.2px,#ccc 0 44.1px,#aaa 0 49.0px,#ccc 0 53.9px,#bbb 0 63.7px,#ccc 0 68.6px) 0 9.8px/100% 4.9px no-repeat,linear-gradient(90deg,#fff 0 4.9px,#eee 0 24.5px,#fff 0 34.3px,#eee 0 58.8px,#fff 0 68.6px) 0 14.7px/100% 4.9px no-repeat"></div>
<div class="mz " style="left:467px;top:4.5px;width:49.0px;height:19.6px;background:linear-gradient(90deg,#eee 0 44.1px,#fff 0 49.0px) 0 0.0px/100% 4.9px no-repeat,linear-gradient(90deg,#aaa 0 4.9px,#bbb 0 9.8px,#aaa 0 14.7px,#888 0 19.6px,#aaa 0 24.5px,#bbb 0 29.4px,#aaa 0 34.3px,#bbb 0 44.1px,#ccc 0 49.0px) 0 4.9px/100% 4.9px no-repeat,linear-gradient(90deg,#ccc 0 4.9px,#bbb 0 9.8px,#ccc 0 14.7px,#bbb 0 24.5px,#aaa 0 29.4px,#ccc 0 34.3px,#999 0 39.2px,#ccc 0 49.0px) 0 9.8px/100% 4.9px no-repeat,linear-gradient(90deg,#fff 0 9.8px,#eee 0 44.1px,#fff 0 49.0px) 0 14.7px/100% 4.9px no-repeat"></div>
<span class="c" style="left:779px">0/5</span><span class="c" style="left:847.5px">3/7</span><span class="c" style="left:931.5px">-</span>
<i class="lg" style="background:#ffff8d"></i>
</div>
<div class="row" style="top:276.74px">
<svg class="ric" viewBox="0 0 16 16"><use href="#usr"/></svg>
<i class="cv" style="left:42px;width:134px"></i><i class="cv" style="left:355px;width:167px"></i>
<div class="mz " style="left:51px;top:4.5px;width:49.0px;height:19.6px;background:linear-gradient(90deg,#eee 0 49.0px) 0 0.0px/100% 4.9px no-repeat,linear-gradient(90deg,#bbb 0 4.9px,#ccc 0 9.8px,#bbb 0 14.7px,#aaa 0 19.6px,#ccc 0 24.5px,#bbb 0 39.2px,#aaa 0 44.1px,#ddd 0 49.0px) 0 4.9px/100% 4.9px no-repeat,linear-gradient(90deg,#bbb 0 4.9px,#ccc 0 9.8px,#bbb 0 19.6px,#ccc 0 29.4px,#bbb 0 34.3px,#ccc 0 39.2px,#aaa 0 44.1px,#ddd 0 49.0px) 0 9.8px/100% 4.9px no-repeat,linear-gradient(90deg,#fff 0 4.9px,#eee 0 44.1px,#fff 0 49.0px) 0 14.7px/100% 4.9px no-repeat"></div>
<div class="mz " style="left:362px;top:4.5px;width:68.6px;height:19.6px;background:linear-gradient(90deg,#fff 0 4.9px,#eee 0 68.6px) 0 0.0px/100% 4.9px no-repeat,linear-gradient(90deg,#ccc 0 4.9px,#bbb 0 9.8px,#aaa 0 14.7px,#bbb 0 24.5px,#aaa 0 29.4px,#ccc 0 39.2px,#aaa 0 44.1px,#ccc 0 49.0px,#aaa 0 53.9px,#bbb 0 58.8px,#999 0 63.7px,#ddd 0 68.6px) 0 4.9px/100% 4.9px no-repeat,linear-gradient(90deg,#ccc 0 4.9px,#bbb 0 9.8px,#ccc 0 14.7px,#aaa 0 19.6px,#ccc 0 24.5px,#aaa 0 29.4px,#bbb 0 34.3px,#ddd 0 39.2px,#aaa 0 44.1px,#bbb 0 53.9px,#aaa 0 63.7px,#ddd 0 68.6px) 0 9.8px/100% 4.9px no-repeat,linear-gradient(90deg,#fff 0 4.9px,#eee 0 9.8px,#fff 0 14.7px,#eee 0 63.7px,#fff 0 68.6px) 0 14.7px/100% 4.9px no-repeat"></div>
<div class="mz " style="left:467px;top:4.5px;width:49.0px;height:19.6px;background:linear-gradient(90deg,#eee 0 39.2px,#ddd 0 44.1px,#fff 0 49.0px) 0 0.0px/100% 4.9px no-repeat,linear-gradient(90deg,#ddd 0 4.9px,#aaa 0 9.8px,#ccc 0 19.6px,#bbb 0 24.5px,#aaa 0 29.4px,#bbb 0 34.3px,#999 0 39.2px,#666 0 44.1px,#ddd 0 49.0px) 0 4.9px/100% 4.9px no-repeat,linear-gradient(90deg,#ddd 0 4.9px,#bbb 0 9.8px,#ccc 0 19.6px,#bbb 0 29.4px,#ccc 0 39.2px,#aaa 0 44.1px,#ddd 0 49.0px) 0 9.8px/100% 4.9px no-repeat,linear-gradient(90deg,#fff 0 4.9px,#eee 0 9.8px,#fff 0 19.6px,#eee 0 44.1px,#fff 0 49.0px) 0 14.7px/100% 4.9px no-repeat"></div>
<span class="c" style="left:779px">0/5</span><span class="c" style="left:847.5px">3/7</span><span class="c" style="left:931.5px">-</span>
<i class="lg" style="background:#ffff8d"></i>
</div>
<div class="row" style="top:307.41px">
<svg class="ric" viewBox="0 0 16 16"><use href="#usr"/></svg>
<i class="cv" style="left:42px;width:134px"></i><i class="cv" style="left:355px;width:167px"></i>
<div class="mz " style="left:51px;top:4.5px;width:49.0px;height:19.6px;background:linear-gradient(90deg,#eee 0 29.4px,#ddd 0 34.3px,#eee 0 49.0px) 0 0.0px/100% 4.9px no-repeat,linear-gradient(90deg,#bbb 0 4.9px,#999 0 9.8px,#aaa 0 14.7px,#999 0 19.6px,#aaa 0 24.5px,#ccc 0 29.4px,#999 0 34.3px,#bbb 0 39.2px,#888 0 44.1px,#bbb 0 49.0px) 0 4.9px/100% 4.9px no-repeat,linear-gradient(90deg,#ccc 0 4.9px,#888 0 9.8px,#bbb 0 19.6px,#aaa 0 24.5px,#ccc 0 29.4px,#aaa 0 34.3px,#ddd 0 39.2px,#bbb 0 44.1px,#ccc 0 49.0px) 0 9.8px/100% 4.9px no-repeat,linear-gradient(90deg,#fff 0 4.9px,#eee 0 34.3px,#fff 0 39.2px,#eee 0 49.0px) 0 14.7px/100% 4.9px no-repeat"></div>
<div class="mz " style="left:362px;top:4.5px;width:68.6px;height:19.6px;background:linear-gradient(90deg,#eee 0 68.6px) 0 0.0px/100% 4.9px no-repeat,linear-gradient(90deg,#ccc 0 4.9px,#aaa 0 9.8px,#888 0 14.7px,#bbb 0 19.6px,#aaa 0 24.5px,#bbb 0 29.4px,#ccc 0 34.3px,#aaa 0 44.1px,#999 0 49.0px,#aaa 0 53.9px,#bbb 0 63.7px,#ccc 0 68.6px) 0 4.9px/100% 4.9px no-repeat,linear-gradient(90deg,#ddd 0 4.9px,#aaa 0 9.8px,#bbb 0 14.7px,#ccc 0 19.6px,#999 0 24.5px,#bbb 0 29.4px,#ccc 0 34.3px,#bbb 0 39.2px,#aaa 0 44.1px,#bbb 0 49.0px,#aaa 0 53.9px,#bbb 0 58.8px,#ccc 0 68.6px) 0 9.8px/100% 4.9px no-repeat,linear-gradient(90deg,#fff 0 4.9px,#eee 0 14.7px,#fff 0 19.6px,#eee 0 29.4px,#fff 0 34.3px,#eee 0 39.2px,#fff 0 44.1px,#eee 0 63.7px,#fff 0 68.6px) 0 14.7px/100% 4.9px no-repeat"></div>
<div class="mz " style="left:467px;top:4.5px;width:49.0px;height:19.6px;background:linear-gradient(90deg,#eee 0 44.1px,#fff 0 49.0px) 0 0.0px/100% 4.9px no-repeat,linear-gradient(90deg,#ccc 0 4.9px,#bbb 0 9.8px,#999 0 14.7px,#bbb 0 24.5px,#999 0 29.4px,#aaa 0 34.3px,#999 0 44.1px,#ccc 0 49.0px) 0 4.9px/100% 4.9px no-repeat,linear-gradient(90deg,#ccc 0 9.8px,#aaa 0 14.7px,#ccc 0 24.5px,#bbb 0 34.3px,#aaa 0 39.2px,#999 0 44.1px,#ddd 0 49.0px) 0 9.8px/100% 4.9px no-repeat,linear-gradient(90deg,#fff 0 4.9px,#eee 0 44.1px,#fff 0 49.0px) 0 14.7px/100% 4.9px no-repeat"></div>
<span class="c" style="left:779px">0/5</span><span class="c" style="left:847.5px">3/7</span><span class="c" style="left:931.5px">-</span>
<i class="lg" style="background:#b9f6ca"></i>
</div>
<div class="row" style="top:338.08px">
<svg class="ric" viewBox="0 0 16 16"><use href="#usr"/></svg>
<i class="cv" style="left:42px;width:134px"></i><i class="cv" style="left:355px;width:167px"></i>
<div class="mz " style="left:51px;top:4.5px;width:49.0px;height:19.6px;background:linear-gradient(90deg,#eee 0 49.0px) 0 0.0px/100% 4.9px no-repeat,linear-gradient(90deg,#ddd 0 4.9px,#999 0 9.8px,#aaa 0 19.6px,#bbb 0 24.5px,#777 0 29.4px,#999 0 34.3px,#aaa 0 39.2px,#ccc 0 44.1px,#bbb 0 49.0px) 0 4.9px/100% 4.9px no-repeat,linear-gradient(90deg,#ccc 0 4.9px,#888 0 9.8px,#bbb 0 14.7px,#ccc 0 19.6px,#aaa 0 34.3px,#bbb 0 39.2px,#ddd 0 49.0px) 0 9.8px/100% 4.9px no-repeat,linear-gradient(90deg,#fff 0 4.9px,#eee 0 14.7px,#fff 0 19.6px,#eee 0 39.2px,#fff 0 49.0px) 0 14.7px/100% 4.9px no-repeat"></div>
<div class="mz " style="left:362px;top:4.5px;width:68.6px;height:19.6px;background:linear-gradient(90deg,#eee 0 68.6px) 0 0.0px/100% 4.9px no-repeat,linear-gradient(90deg,#ccc 0 4.9px,#bbb 0 19.6px,#aaa 0 24.5px,#bbb 0 29.4px,#999 0 34.3px,#bbb 0 39.2px,#777 0 44.1px,#ccc 0 49.0px,#aaa 0 63.7px,#ddd 0 68.6px) 0 4.9px/100% 4.9px no-repeat,linear-gradient(90deg,#ccc 0 9.8px,#bbb 0 14.7px,#ccc 0 19.6px,#bbb 0 24.5px,#aaa 0 29.4px,#ccc 0 34.3px,#aaa 0 39.2px,#888 0 44.1px,#bbb 0 53.9px,#aaa 0 58.8px,#bbb 0 63.7px,#ccc 0 68.6px) 0 9.8px/100% 4.9px no-repeat,linear-gradient(90deg,#eee 0 4.9px,#fff 0 9.8px,#eee 0 14.7px,#fff 0 19.6px,#eee 0 58.8px,#fff 0 68.6px) 0 14.7px/100% 4.9px no-repeat"></div>
<div class="mz " style="left:467px;top:4.5px;width:49.0px;height:19.6px;background:linear-gradient(90deg,#eee 0 44.1px,#fff 0 49.0px) 0 0.0px/100% 4.9px no-repeat,linear-gradient(90deg,#ddd 0 4.9px,#aaa 0 14.7px,#bbb 0 19.6px,#999 0 24.5px,#bbb 0 29.4px,#aaa 0 34.3px,#999 0 44.1px,#ccc 0 49.0px) 0 4.9px/100% 4.9px no-repeat,linear-gradient(90deg,#ccc 0 9.8px,#bbb 0 14.7px,#ccc 0 19.6px,#999 0 24.5px,#ccc 0 29.4px,#bbb 0 44.1px,#ddd 0 49.0px) 0 9.8px/100% 4.9px no-repeat,linear-gradient(90deg,#fff 0 4.9px,#eee 0 14.7px,#fff 0 19.6px,#eee 0 44.1px,#fff 0 49.0px) 0 14.7px/100% 4.9px no-repeat"></div>
<span class="c" style="left:779px">0/5</span><span class="c" style="left:847.5px">3/7</span><span class="c" style="left:931.5px">-</span>
</div>
<div class="row" style="top:368.75px">
<svg class="ric" viewBox="0 0 16 16"><use href="#usr"/></svg>
<i class="cv" style="left:42px;width:134px"></i><i class="cv" style="left:355px;width:167px"></i>
<div class="mz " style="left:51px;top:4.5px;width:49.0px;height:19.6px;background:linear-gradient(90deg,#fff 0 4.9px,#eee 0 9.8px,#ddd 0 14.7px,#eee 0 49.0px) 0 0.0px/100% 4.9px no-repeat,linear-gradient(90deg,#ddd 0 4.9px,#bbb 0 9.8px,#777 0 14.7px,#aaa 0 24.5px,#bbb 0 29.4px,#ccc 0 34.3px,#888 0 39.2px,#bbb 0 44.1px,#ccc 0 49.0px) 0 4.9px/100% 4.9px no-repeat,linear-gradient(90deg,#ccc 0 4.9px,#bbb 0 9.8px,#888 0 14.7px,#bbb 0 19.6px,#aaa 0 24.5px,#bbb 0 29.4px,#ddd 0 34.3px,#ccc 0 39.2px,#bbb 0 44.1px,#ddd 0 49.0px) 0 9.8px/100% 4.9px no-repeat,linear-gradient(90deg,#fff 0 4.9px,#eee 0 29.4px,#fff 0 34.3px,#eee 0 44.1px,#fff 0 49.0px) 0 14.7px/100% 4.9px no-repeat"></div>
<div class="mz " style="left:362px;top:4.5px;width:68.6px;height:19.6px;background:linear-gradient(90deg,#fff 0 4.9px,#eee 0 68.6px) 0 0.0px/100% 4.9px no-repeat,linear-gradient(90deg,#ddd 0 4.9px,#aaa 0 9.8px,#bbb 0 14.7px,#999 0 19.6px,#bbb 0 29.4px,#aaa 0 34.3px,#999 0 39.2px,#bbb 0 49.0px,#999 0 53.9px,#aaa 0 63.7px,#ddd 0 68.6px) 0 4.9px/100% 4.9px no-repeat,linear-gradient(90deg,#ddd 0 4.9px,#bbb 0 19.6px,#aaa 0 24.5px,#ddd 0 29.4px,#bbb 0 44.1px,#aaa 0 53.9px,#ddd 0 58.8px,#bbb 0 63.7px,#ddd 0 68.6px) 0 9.8px/100% 4.9px no-repeat,linear-gradient(90deg,#fff 0 4.9px,#eee 0 9.8px,#fff 0 14.7px,#eee 0 29.4px,#fff 0 34.3px,#eee 0 44.1px,#fff 0 49.0px,#eee 0 53.9px,#fff 0 58.8px,#eee 0 63.7px,#fff 0 68.6px) 0 14.7px/100% 4.9px no-repeat"></div>
<div class="mz " style="left:467px;top:4.5px;width:49.0px;height:19.6px;background:linear-gradient(90deg,#eee 0 44.1px,#fff 0 49.0px) 0 0.0px/100% 4.9px no-repeat,linear-gradient(90deg,#ccc 0 4.9px,#aaa 0 9.8px,#bbb 0 14.7px,#aaa 0 24.5px,#bbb 0 29.4px,#aaa 0 39.2px,#777 0 44.1px,#ccc 0 49.0px) 0 4.9px/100% 4.9px no-repeat,linear-gradient(90deg,#ccc 0 9.8px,#aaa 0 14.7px,#bbb 0 19.6px,#aaa 0 24.5px,#ccc 0 29.4px,#bbb 0 34.3px,#777 0 39.2px,#888 0 44.1px,#ccc 0 49.0px) 0 9.8px/100% 4.9px no-repeat,linear-gradient(90deg,#fff 0 4.9px,#eee 0 44.1px,#fff 0 49.0px) 0 14.7px/100% 4.9px no-repeat"></div>
<span class="c" style="left:779px">0/5</span><span class="c" style="left:847.5px">3/7</span><span class="c" style="left:931.5px">-</span>
<i class="lg" style="background:#ffff8d"></i>
</div>
<div class="row" style="top:399.42px">
<svg class="ric" viewBox="0 0 16 16"><use href="#usr"/></svg>
<i class="cv" style="left:42px;width:134px"></i><i class="cv" style="left:355px;width:167px"></i>
<div class="mz " style="left:51px;top:4.5px;width:49.0px;height:19.6px;background:linear-gradient(90deg,#eee 0 49.0px) 0 0.0px/100% 4.9px no-repeat,linear-gradient(90deg,#ccc 0 4.9px,#aaa 0 9.8px,#ccc 0 14.7px,#888 0 19.6px,#666 0 24.5px,#aaa 0 29.4px,#999 0 34.3px,#777 0 39.2px,#999 0 44.1px,#ccc 0 49.0px) 0 4.9px/100% 4.9px no-repeat,linear-gradient(90deg,#ccc 0 4.9px,#aaa 0 9.8px,#bbb 0 19.6px,#aaa 0 24.5px,#bbb 0 34.3px,#aaa 0 39.2px,#ccc 0 44.1px,#ddd 0 49.0px) 0 9.8px/100% 4.9px no-repeat,linear-gradient(90deg,#fff 0 4.9px,#eee 0 9.8px,#fff 0 14.7px,#eee 0 44.1px,#fff 0 49.0px) 0 14.7px/100% 4.9px no-repeat"></div>
<div class="mz " style="left:362px;top:4.5px;width:68.6px;height:19.6px;background:linear-gradient(90deg,#fff 0 4.9px,#eee 0 63.7px,#fff 0 68.6px) 0 0.0px/100% 4.9px no-repeat,linear-gradient(90deg,#ddd 0 4.9px,#999 0 19.6px,#aaa 0 24.5px,#bbb 0 29.4px,#ccc 0 34.3px,#bbb 0 39.2px,#aaa 0 44.1px,#999 0 53.9px,#ccc 0 58.8px,#bbb 0 63.7px,#ddd 0 68.6px) 0 4.9px/100% 4.9px no-repeat,linear-gradient(90deg,#ddd 0 4.9px,#aaa 0 9.8px,#ccc 0 14.7px,#aaa 0 19.6px,#bbb 0 29.4px,#ccc 0 34.3px,#bbb 0 39.2px,#ccc 0 44.1px,#999 0 49.0px,#aaa 0 53.9px,#ddd 0 58.8px,#ccc 0 63.7px,#ddd 0 68.6px) 0 9.8px/100% 4.9px no-repeat,linear-gradient(90deg,#fff 0 4.9px,#eee 0 29.4px,#fff 0 34.3px,#eee 0 49.0px,#fff 0 53.9px,#eee 0 63.7px,#fff 0 68.6px) 0 14.7px/100% 4.9px no-repeat"></div>
<div class="mz " style="left:467px;top:4.5px;width:49.0px;height:19.6px;background:linear-gradient(90deg,#eee 0 49.0px) 0 0.0px/100% 4.9px no-repeat,linear-gradient(90deg,#aaa 0 4.9px,#ccc 0 9.8px,#bbb 0 19.6px,#999 0 29.4px,#bbb 0 39.2px,#aaa 0 44.1px,#ccc 0 49.0px) 0 4.9px/100% 4.9px no-repeat,linear-gradient(90deg,#ccc 0 4.9px,#aaa 0 14.7px,#bbb 0 19.6px,#aaa 0 29.4px,#ccc 0 34.3px,#bbb 0 44.1px,#ccc 0 49.0px) 0 9.8px/100% 4.9px no-repeat,linear-gradient(90deg,#eee 0 14.7px,#fff 0 19.6px,#eee 0 29.4px,#fff 0 34.3px,#eee 0 39.2px,#fff 0 49.0px) 0 14.7px/100% 4.9px no-repeat"></div>
<span class="c" style="left:779px">0/5</span><span class="c" style="left:847.5px">3/7</span><span class="c" style="left:931.5px">-</span>
<i class="lg" style="background:#8c9eff"></i>
</div>
<div class="row" style="top:430.09px">
<svg class="ric" viewBox="0 0 16 16"><use href="#uadm"/></svg>
<i class="cv" style="left:42px;width:134px"></i><i class="cv" style="left:355px;width:264px"></i>
<div class="mz " style="left:51px;top:4.5px;width:161.7px;height:19.6px;background:linear-gradient(90deg,#eee 0 19.6px,#fff 0 24.5px,#eee 0 44.1px,#fff 0 49.0px,#eee 0 93.1px,#fff 0 98.0px,#eee 0 122.5px,#fff 0 127.4px,#eee 0 161.7px) 0 0.0px/100% 4.9px no-repeat,linear-gradient(90deg,#ccc 0 4.9px,#aaa 0 9.8px,#bbb 0 19.6px,#eee 0 24.5px,#ccc 0 29.4px,#aaa 0 34.3px,#bbb 0 39.2px,#ccc 0 44.1px,#eee 0 49.0px,#ccc 0 53.9px,#aaa 0 63.7px,#999 0 68.6px,#aaa 0 78.4px,#bbb 0 83.3px,#aaa 0 88.2px,#999 0 93.1px,#eee 0 98.0px,#aaa 0 102.9px,#ccc 0 112.7px,#bbb 0 117.6px,#888 0 122.5px,#eee 0 127.4px,#bbb 0 132.3px,#999 0 137.2px,#bbb 0 142.1px,#aaa 0 147.0px,#999 0 151.9px,#aaa 0 156.8px,#ccc 0 161.7px) 0 4.9px/100% 4.9px no-repeat,linear-gradient(90deg,#ccc 0 9.8px,#bbb 0 14.7px,#ddd 0 19.6px,#eee 0 24.5px,#ccc 0 29.4px,#aaa 0 34.3px,#ddd 0 39.2px,#ccc 0 44.1px,#eee 0 49.0px,#ccc 0 58.8px,#bbb 0 63.7px,#aaa 0 68.6px,#ccc 0 83.3px,#aaa 0 93.1px,#eee 0 98.0px,#ccc 0 112.7px,#bbb 0 122.5px,#eee 0 127.4px,#ccc 0 132.3px,#aaa 0 137.2px,#bbb 0 142.1px,#ccc 0 147.0px,#999 0 151.9px,#ccc 0 156.8px,#ddd 0 161.7px) 0 9.8px/100% 4.9px no-repeat,linear-gradient(90deg,#fff 0 4.9px,#eee 0 14.7px,#fff 0 39.2px,#eee 0 44.1px,#fff 0 53.9px,#eee 0 78.4px,#fff 0 83.3px,#eee 0 93.1px,#fff 0 98.0px,#eee 0 102.9px,#fff 0 112.7px,#eee 0 122.5px,#fff 0 127.4px,#eee 0 156.8px,#fff 0 161.7px) 0 14.7px/100% 4.9px no-repeat"></div>
<div class="mz " style="left:362px;top:4.5px;width:68.6px;height:19.6px;background:linear-gradient(90deg,#eee 0 53.9px,#ddd 0 58.8px,#eee 0 68.6px) 0 0.0px/100% 4.9px no-repeat,linear-gradient(90deg,#ccc 0 4.9px,#aaa 0 14.7px,#bbb 0 19.6px,#aaa 0 24.5px,#bbb 0 29.4px,#999 0 34.3px,#bbb 0 39.2px,#aaa 0 44.1px,#999 0 49.0px,#888 0 53.9px,#666 0 58.8px,#ccc 0 68.6px) 0 4.9px/100% 4.9px no-repeat,linear-gradient(90deg,#ccc 0 4.9px,#bbb 0 9.8px,#aaa 0 14.7px,#bbb 0 29.4px,#ccc 0 39.2px,#999 0 44.1px,#bbb 0 49.0px,#999 0 58.8px,#ddd 0 68.6px) 0 9.8px/100% 4.9px no-repeat,linear-gradient(90deg,#fff 0 4.9px,#eee 0 63.7px,#fff 0 68.6px) 0 14.7px/100% 4.9px no-repeat"></div>
<div class="mz " style="left:467px;top:4.5px;width:49.0px;height:19.6px;background:linear-gradient(90deg,#eee 0 9.8px,#ddd 0 14.7px,#eee 0 24.5px,#ddd 0 29.4px,#eee 0 49.0px) 0 0.0px/100% 4.9px no-repeat,linear-gradient(90deg,#ccc 0 4.9px,#bbb 0 9.8px,#666 0 14.7px,#bbb 0 24.5px,#888 0 29.4px,#ccc 0 34.3px,#aaa 0 44.1px,#bbb 0 49.0px) 0 4.9px/100% 4.9px no-repeat,linear-gradient(90deg,#ddd 0 4.9px,#bbb 0 9.8px,#999 0 14.7px,#aaa 0 19.6px,#ccc 0 24.5px,#bbb 0 29.4px,#ccc 0 34.3px,#aaa 0 44.1px,#ccc 0 49.0px) 0 9.8px/100% 4.9px no-repeat,linear-gradient(90deg,#fff 0 4.9px,#eee 0 44.1px,#fff 0 49.0px) 0 14.7px/100% 4.9px no-repeat"></div>
<span class="c" style="left:779px">1/5</span><span class="c" style="left:847.5px">6/7</span><span class="c" style="left:931.5px">-</span>
<i class="lg" style="background:#ff80ab"></i>
</div>
<div class="row" style="top:460.76px">
<svg class="ric" viewBox="0 0 16 16"><use href="#usr"/></svg>
<i class="cv" style="left:42px;width:134px"></i><i class="cv" style="left:355px;width:264px"></i>
<div class="mz " style="left:51px;top:4.5px;width:161.7px;height:19.6px;background:linear-gradient(90deg,#eee 0 9.8px,#ddd 0 14.7px,#eee 0 24.5px,#ddd 0 29.4px,#eee 0 39.2px,#fff 0 44.1px,#eee 0 73.5px,#fff 0 78.4px,#ddd 0 83.3px,#eee 0 88.2px,#ddd 0 93.1px,#eee 0 98.0px,#ddd 0 102.9px,#eee 0 112.7px,#fff 0 117.6px,#eee 0 142.1px,#fff 0 147.0px,#eee 0 156.8px,#fff 0 161.7px) 0 0.0px/100% 4.9px no-repeat,linear-gradient(90deg,#ccc 0 4.9px,#bbb 0 9.8px,#999 0 19.6px,#ccc 0 24.5px,#666 0 29.4px,#ccc 0 34.3px,#aaa 0 39.2px,#eee 0 44.1px,#aaa 0 58.8px,#888 0 63.7px,#aaa 0 68.6px,#ccc 0 73.5px,#eee 0 78.4px,#888 0 83.3px,#aaa 0 98.0px,#888 0 102.9px,#bbb 0 107.8px,#ccc 0 112.7px,#eee 0 117.6px,#aaa 0 122.5px,#666 0 127.4px,#aaa 0 132.3px,#bbb 0 137.2px,#777 0 142.1px,#eee 0 147.0px,#bbb 0 151.9px,#aaa 0 156.8px,#ccc 0 161.7px) 0 4.9px/100% 4.9px no-repeat,linear-gradient(90deg,#ccc 0 9.8px,#888 0 14.7px,#ccc 0 19.6px,#bbb 0 24.5px,#aaa 0 29.4px,#ccc 0 34.3px,#bbb 0 39.2px,#eee 0 44.1px,#ccc 0 58.8px,#999 0 68.6px,#bbb 0 73.5px,#eee 0 78.4px,#999 0 83.3px,#aaa 0 88.2px,#888 0 93.1px,#bbb 0 98.0px,#888 0 102.9px,#bbb 0 107.8px,#ddd 0 112.7px,#eee 0 117.6px,#bbb 0 122.5px,#777 0 127.4px,#999 0 132.3px,#bbb 0 137.2px,#888 0 142.1px,#eee 0 147.0px,#ccc 0 151.9px,#bbb 0 156.8px,#ccc 0 161.7px) 0 9.8px/100% 4.9px no-repeat,linear-gradient(90deg,#fff 0 4.9px,#eee 0 29.4px,#fff 0 44.1px,#eee 0 68.6px,#fff 0 78.4px,#eee 0 83.3px,#fff 0 88.2px,#eee 0 107.8px,#fff 0 117.6px,#eee 0 142.1px,#fff 0 147.0px,#eee 0 156.8px,#fff 0 161.7px) 0 14.7px/100% 4.9px no-repeat"></div>
<div class="mz " style="left:362px;top:4.5px;width:68.6px;height:19.6px;background:linear-gradient(90deg,#eee 0 4.9px,#ddd 0 9.8px,#eee 0 68.6px) 0 0.0px/100% 4.9px no-repeat,linear-gradient(90deg,#ccc 0 4.9px,#999 0 9.8px,#ccc 0 14.7px,#aaa 0 19.6px,#bbb 0 24.5px,#777 0 29.4px,#888 0 34.3px,#999 0 44.1px,#bbb 0 49.0px,#ccc 0 53.9px,#bbb 0 58.8px,#aaa 0 63.7px,#bbb 0 68.6px) 0 4.9px/100% 4.9px no-repeat,linear-gradient(90deg,#ccc 0 4.9px,#888 0 9.8px,#ddd 0 14.7px,#bbb 0 24.5px,#888 0 29.4px,#999 0 34.3px,#ccc 0 39.2px,#aaa 0 44.1px,#bbb 0 53.9px,#aaa 0 58.8px,#bbb 0 63.7px,#ccc 0 68.6px) 0 9.8px/100% 4.9px no-repeat,linear-gradient(90deg,#fff 0 4.9px,#eee 0 9.8px,#fff 0 14.7px,#eee 0 44.1px,#fff 0 53.9px,#eee 0 68.6px) 0 14.7px/100% 4.9px no-repeat"></div>
<div class="mz " style="left:467px;top:4.5px;width:49.0px;height:19.6px;background:linear-gradient(90deg,#fff 0 4.9px,#eee 0 49.0px) 0 0.0px/100% 4.9px no-repeat,linear-gradient(90deg,#ddd 0 4.9px,#ccc 0 9.8px,#999 0 19.6px,#bbb 0 24.5px,#aaa 0 29.4px,#999 0 34.3px,#aaa 0 39.2px,#bbb 0 44.1px,#ddd 0 49.0px) 0 4.9px/100% 4.9px no-repeat,linear-gradient(90deg,#ccc 0 4.9px,#bbb 0 29.4px,#999 0 34.3px,#aaa 0 44.1px,#ccc 0 49.0px) 0 9.8px/100% 4.9px no-repeat,linear-gradient(90deg,#fff 0 14.7px,#eee 0 24.5px,#fff 0 29.4px,#eee 0 44.1px,#fff 0 49.0px) 0 14.7px/100% 4.9px no-repeat"></div>
<span class="c" style="left:779px">0/5</span><span class="c" style="left:847.5px">3/7</span><span class="c" style="left:931.5px">-</span>
<span class="c" style="left:1390.5px">26.01.2018</span>
<i class="lg" style="background:#b9f6ca"></i>
</div>
<div class="row" style="top:491.43px">
<svg class="ric" viewBox="0 0 16 16"><use href="#usr"/></svg>
<i class="cv" style="left:42px;width:134px"></i><i class="cv" style="left:355px;width:264px"></i>
<div class="mz " style="left:51px;top:4.5px;width:68.6px;height:19.6px;background:linear-gradient(90deg,#eee 0 49.0px,#ddd 0 53.9px,#eee 0 63.7px,#fff 0 68.6px) 0 0.0px/100% 4.9px no-repeat,linear-gradient(90deg,#ddd 0 4.9px,#999 0 9.8px,#aaa 0 24.5px,#bbb 0 29.4px,#999 0 34.3px,#ccc 0 39.2px,#bbb 0 49.0px,#999 0 53.9px,#aaa 0 58.8px,#ccc 0 68.6px) 0 4.9px/100% 4.9px no-repeat,linear-gradient(90deg,#ddd 0 4.9px,#aaa 0 9.8px,#ccc 0 14.7px,#bbb 0 24.5px,#ccc 0 29.4px,#aaa 0 34.3px,#ccc 0 39.2px,#aaa 0 49.0px,#888 0 53.9px,#ccc 0 63.7px,#ddd 0 68.6px) 0 9.8px/100% 4.9px no-repeat,linear-gradient(90deg,#fff 0 4.9px,#eee 0 63.7px,#fff 0 68.6px) 0 14.7px/100% 4.9px no-repeat"></div>
<div class="mz " style="left:362px;top:4.5px;width:68.6px;height:19.6px;background:linear-gradient(90deg,#eee 0 68.6px) 0 0.0px/100% 4.9px no-repeat,linear-gradient(90deg,#bbb 0 4.9px,#888 0 9.8px,#bbb 0 19.6px,#999 0 24.5px,#bbb 0 34.3px,#aaa 0 39.2px,#888 0 44.1px,#ccc 0 49.0px,#999 0 53.9px,#aaa 0 58.8px,#999 0 63.7px,#ddd 0 68.6px) 0 4.9px/100% 4.9px no-repeat,linear-gradient(90deg,#ccc 0 4.9px,#aaa 0 9.8px,#ccc 0 14.7px,#bbb 0 19.6px,#aaa 0 24.5px,#ccc 0 34.3px,#bbb 0 58.8px,#aaa 0 63.7px,#ddd 0 68.6px) 0 9.8px/100% 4.9px no-repeat,linear-gradient(90deg,#fff 0 4.9px,#eee 0 44.1px,#fff 0 49.0px,#eee 0 63.7px,#fff 0 68.6px) 0 14.7px/100% 4.9px no-repeat"></div>
<div class="mz " style="left:467px;top:4.5px;width:49.0px;height:19.6px;background:linear-gradient(90deg,#fff 0 4.9px,#eee 0 49.0px) 0 0.0px/100% 4.9px no-repeat,linear-gradient(90deg,#ddd 0 4.9px,#bbb 0 9.8px,#aaa 0 14.7px,#777 0 19.6px,#aaa 0 24.5px,#bbb 0 29.4px,#999 0 34.3px,#888 0 39.2px,#999 0 44.1px,#ccc 0 49.0px) 0 4.9px/100% 4.9px no-repeat,linear-gradient(90deg,#ddd 0 4.9px,#bbb 0 9.8px,#aaa 0 14.7px,#bbb 0 24.5px,#ddd 0 29.4px,#bbb 0 34.3px,#aaa 0 39.2px,#bbb 0 44.1px,#ddd 0 49.0px) 0 9.8px/100% 4.9px no-repeat,linear-gradient(90deg,#fff 0 4.9px,#eee 0 44.1px,#fff 0 49.0px) 0 14.7px/100% 4.9px no-repeat"></div>
<span class="c" style="left:779px">0/5</span><span class="c" style="left:847.5px">3/7</span><span class="c" style="left:931.5px">-</span>
<i class="lg" style="background:#ffff8d"></i>
</div>
<div class="row" style="top:522.10px">
<svg class="ric" viewBox="0 0 16 16"><use href="#uadm"/></svg>
<i class="cv" style="left:42px;width:134px"></i><i class="cv" style="left:355px;width:264px"></i>
<div class="mz " style="left:51px;top:4.5px;width:161.7px;height:19.6px;background:linear-gradient(90deg,#eee 0 24.5px,#fff 0 29.4px,#eee 0 49.0px,#fff 0 53.9px,#eee 0 93.1px,#fff 0 98.0px,#eee 0 122.5px,#fff 0 127.4px,#eee 0 161.7px) 0 0.0px/100% 4.9px no-repeat,linear-gradient(90deg,#bbb 0 9.8px,#aaa 0 19.6px,#bbb 0 24.5px,#eee 0 29.4px,#aaa 0 39.2px,#999 0 49.0px,#eee 0 53.9px,#bbb 0 58.8px,#aaa 0 68.6px,#bbb 0 78.4px,#aaa 0 88.2px,#bbb 0 93.1px,#eee 0 98.0px,#999 0 102.9px,#bbb 0 112.7px,#ccc 0 117.6px,#bbb 0 122.5px,#eee 0 127.4px,#aaa 0 132.3px,#bbb 0 137.2px,#aaa 0 142.1px,#bbb 0 147.0px,#aaa 0 151.9px,#bbb 0 156.8px,#ccc 0 161.7px) 0 4.9px/100% 4.9px no-repeat,linear-gradient(90deg,#ccc 0 4.9px,#bbb 0 24.5px,#eee 0 29.4px,#bbb 0 39.2px,#999 0 49.0px,#eee 0 53.9px,#bbb 0 63.7px,#ccc 0 68.6px,#bbb 0 78.4px,#ccc 0 83.3px,#999 0 88.2px,#bbb 0 93.1px,#eee 0 98.0px,#aaa 0 102.9px,#ccc 0 107.8px,#aaa 0 112.7px,#ccc 0 122.5px,#eee 0 127.4px,#bbb 0 132.3px,#ccc 0 147.0px,#aaa 0 151.9px,#bbb 0 156.8px,#ddd 0 161.7px) 0 9.8px/100% 4.9px no-repeat,linear-gradient(90deg,#fff 0 9.8px,#eee 0 24.5px,#fff 0 29.4px,#eee 0 49.0px,#fff 0 53.9px,#eee 0 68.6px,#fff 0 73.5px,#eee 0 78.4px,#fff 0 83.3px,#eee 0 93.1px,#fff 0 98.0px,#eee 0 122.5px,#fff 0 127.4px,#eee 0 132.3px,#fff 0 137.2px,#eee 0 147.0px,#fff 0 151.9px,#eee 0 156.8px,#fff 0 161.7px) 0 14.7px/100% 4.9px no-repeat"></div>
<div class="mz " style="left:362px;top:4.5px;width:68.6px;height:19.6px;background:linear-gradient(90deg,#fff 0 4.9px,#eee 0 9.8px,#ddd 0 14.7px,#eee 0 68.6px) 0 0.0px/100% 4.9px no-repeat,linear-gradient(90deg,#ccc 0 4.9px,#bbb 0 9.8px,#888 0 14.7px,#aaa 0 19.6px,#888 0 24.5px,#aaa 0 39.2px,#999 0 44.1px,#aaa 0 53.9px,#bbb 0 63.7px,#ddd 0 68.6px) 0 4.9px/100% 4.9px no-repeat,linear-gradient(90deg,#ddd 0 4.9px,#ccc 0 9.8px,#888 0 14.7px,#aaa 0 19.6px,#999 0 24.5px,#aaa 0 29.4px,#bbb 0 34.3px,#999 0 39.2px,#bbb 0 49.0px,#aaa 0 53.9px,#bbb 0 58.8px,#ccc 0 68.6px) 0 9.8px/100% 4.9px no-repeat,linear-gradient(90deg,#fff 0 9.8px,#eee 0 63.7px,#fff 0 68.6px) 0 14.7px/100% 4.9px no-repeat"></div>
<div class="mz " style="left:467px;top:4.5px;width:49.0px;height:19.6px;background:linear-gradient(90deg,#fff 0 4.9px,#eee 0 49.0px) 0 0.0px/100% 4.9px no-repeat,linear-gradient(90deg,#ddd 0 4.9px,#bbb 0 9.8px,#aaa 0 14.7px,#ccc 0 19.6px,#aaa 0 24.5px,#bbb 0 29.4px,#ccc 0 34.3px,#bbb 0 39.2px,#aaa 0 44.1px,#ccc 0 49.0px) 0 4.9px/100% 4.9px no-repeat,linear-gradient(90deg,#ddd 0 4.9px,#ccc 0 9.8px,#bbb 0 14.7px,#ccc 0 19.6px,#aaa 0 24.5px,#ccc 0 29.4px,#ddd 0 34.3px,#bbb 0 39.2px,#ccc 0 44.1px,#ddd 0 49.0px) 0 9.8px/100% 4.9px no-repeat,linear-gradient(90deg,#fff 0 4.9px,#eee 0 14.7px,#fff 0 19.6px,#eee 0 24.5px,#fff 0 34.3px,#eee 0 39.2px,#fff 0 49.0px) 0 14.7px/100% 4.9px no-repeat"></div>
<span class="c" style="left:779px">3/5</span><span class="c" style="left:847.5px">6/7</span><span class="c" style="left:931.5px">-</span>
<span class="c" style="left:1390.5px">21.09.2018</span>
</div>
<div class="row" style="top:552.77px">
<svg class="ric" viewBox="0 0 16 16"><use href="#usr"/></svg>
<i class="cv" style="left:42px;width:134px"></i><i class="cv" style="left:355px;width:264px"></i>
<div class="mz " style="left:51px;top:4.5px;width:112.7px;height:19.6px;background:linear-gradient(90deg,#eee 0 19.6px,#fff 0 24.5px,#eee 0 49.0px,#fff 0 53.9px,#ddd 0 58.8px,#eee 0 102.9px,#fff 0 112.7px) 0 0.0px/100% 4.9px no-repeat,linear-gradient(90deg,#aaa 0 4.9px,#ccc 0 9.8px,#bbb 0 14.7px,#999 0 19.6px,#eee 0 24.5px,#ccc 0 29.4px,#999 0 34.3px,#bbb 0 49.0px,#eee 0 53.9px,#999 0 58.8px,#aaa 0 63.7px,#999 0 68.6px,#aaa 0 73.5px,#666 0 78.4px,#bbb 0 83.3px,#999 0 88.2px,#aaa 0 93.1px,#bbb 0 98.0px,#aaa 0 102.9px,#eee 0 107.8px,#ccc 0 112.7px) 0 4.9px/100% 4.9px no-repeat,linear-gradient(90deg,#ccc 0 4.9px,#bbb 0 9.8px,#aaa 0 14.7px,#bbb 0 19.6px,#eee 0 24.5px,#ccc 0 34.3px,#aaa 0 39.2px,#ccc 0 49.0px,#eee 0 53.9px,#aaa 0 63.7px,#bbb 0 68.6px,#aaa 0 73.5px,#999 0 78.4px,#ccc 0 83.3px,#bbb 0 88.2px,#ccc 0 93.1px,#bbb 0 98.0px,#aaa 0 102.9px,#eee 0 107.8px,#ccc 0 112.7px) 0 9.8px/100% 4.9px no-repeat,linear-gradient(90deg,#fff 0 9.8px,#eee 0 19.6px,#fff 0 29.4px,#eee 0 39.2px,#fff 0 44.1px,#eee 0 49.0px,#fff 0 53.9px,#eee 0 78.4px,#fff 0 83.3px,#eee 0 88.2px,#fff 0 93.1px,#eee 0 102.9px,#fff 0 112.7px) 0 14.7px/100% 4.9px no-repeat"></div>
<div class="mz " style="left:362px;top:4.5px;width:68.6px;height:19.6px;background:linear-gradient(90deg,#eee 0 68.6px) 0 0.0px/100% 4.9px no-repeat,linear-gradient(90deg,#aaa 0 4.9px,#bbb 0 9.8px,#999 0 14.7px,#aaa 0 24.5px,#999 0 34.3px,#aaa 0 39.2px,#888 0 44.1px,#999 0 49.0px,#ccc 0 53.9px,#bbb 0 63.7px,#ccc 0 68.6px) 0 4.9px/100% 4.9px no-repeat,linear-gradient(90deg,#bbb 0 9.8px,#aaa 0 19.6px,#bbb 0 24.5px,#ccc 0 29.4px,#aaa 0 34.3px,#ccc 0 39.2px,#999 0 44.1px,#bbb 0 49.0px,#ccc 0 53.9px,#bbb 0 58.8px,#ccc 0 68.6px) 0 9.8px/100% 4.9px no-repeat,linear-gradient(90deg,#eee 0 14.7px,#fff 0 19.6px,#eee 0 58.8px,#fff 0 68.6px) 0 14.7px/100% 4.9px no-repeat"></div>
<div class="mz " style="left:467px;top:4.5px;width:49.0px;height:19.6px;background:linear-gradient(90deg,#eee 0 49.0px) 0 0.0px/100% 4.9px no-repeat,linear-gradient(90deg,#ccc 0 4.9px,#bbb 0 9.8px,#999 0 14.7px,#bbb 0 24.5px,#aaa 0 29.4px,#ccc 0 34.3px,#aaa 0 44.1px,#ccc 0 49.0px) 0 4.9px/100% 4.9px no-repeat,linear-gradient(90deg,#ddd 0 4.9px,#999 0 9.8px,#aaa 0 14.7px,#ccc 0 24.5px,#bbb 0 29.4px,#ccc 0 34.3px,#bbb 0 39.2px,#ccc 0 49.0px) 0 9.8px/100% 4.9px no-repeat,linear-gradient(90deg,#fff 0 4.9px,#eee 0 19.6px,#fff 0 24.5px,#eee 0 44.1px,#fff 0 49.0px) 0 14.7px/100% 4.9px no-repeat"></div>
<span class="c" style="left:779px">0/5</span><span class="c" style="left:847.5px">4/7</span><span class="c" style="left:931.5px">-</span>
</div>
<div class="row" style="top:583.44px">
<svg class="ric" viewBox="0 0 16 16"><use href="#usr"/></svg>
<i class="cv" style="left:42px;width:134px"></i><i class="cv" style="left:355px;width:264px"></i>
<div class="mz " style="left:51px;top:4.5px;width:142.1px;height:19.6px;background:linear-gradient(90deg,#eee 0 34.3px,#fff 0 39.2px,#eee 0 73.5px,#fff 0 78.4px,#eee 0 122.5px,#fff 0 127.4px,#eee 0 142.1px) 0 0.0px/100% 4.9px no-repeat,linear-gradient(90deg,#bbb 0 9.8px,#aaa 0 14.7px,#bbb 0 19.6px,#aaa 0 24.5px,#777 0 29.4px,#999 0 34.3px,#eee 0 39.2px,#aaa 0 49.0px,#bbb 0 63.7px,#aaa 0 68.6px,#999 0 73.5px,#eee 0 78.4px,#999 0 83.3px,#ccc 0 88.2px,#bbb 0 93.1px,#ccc 0 98.0px,#bbb 0 102.9px,#aaa 0 107.8px,#bbb 0 122.5px,#eee 0 127.4px,#999 0 132.3px,#aaa 0 137.2px,#bbb 0 142.1px) 0 4.9px/100% 4.9px no-repeat,linear-gradient(90deg,#bbb 0 4.9px,#aaa 0 9.8px,#bbb 0 14.7px,#999 0 19.6px,#ccc 0 24.5px,#999 0 29.4px,#bbb 0 34.3px,#eee 0 39.2px,#bbb 0 44.1px,#aaa 0 49.0px,#ccc 0 53.9px,#bbb 0 58.8px,#ccc 0 63.7px,#bbb 0 68.6px,#999 0 73.5px,#eee 0 78.4px,#bbb 0 93.1px,#ddd 0 98.0px,#ccc 0 102.9px,#bbb 0 122.5px,#eee 0 127.4px,#bbb 0 132.3px,#ccc 0 137.2px,#ddd 0 142.1px) 0 9.8px/100% 4.9px no-repeat,linear-gradient(90deg,#eee 0 9.8px,#fff 0 14.7px,#eee 0 19.6px,#fff 0 24.5px,#eee 0 34.3px,#fff 0 39.2px,#eee 0 49.0px,#fff 0 53.9px,#eee 0 58.8px,#fff 0 63.7px,#eee 0 73.5px,#fff 0 78.4px,#eee 0 83.3px,#fff 0 88.2px,#eee 0 98.0px,#fff 0 102.9px,#eee 0 122.5px,#fff 0 132.3px,#eee 0 137.2px,#fff 0 142.1px) 0 14.7px/100% 4.9px no-repeat"></div>
<div class="mz " style="left:362px;top:4.5px;width:68.6px;height:19.6px;background:linear-gradient(90deg,#eee 0 4.9px,#ddd 0 9.8px,#eee 0 68.6px) 0 0.0px/100% 4.9px no-repeat,linear-gradient(90deg,#bbb 0 4.9px,#999 0 9.8px,#bbb 0 14.7px,#aaa 0 24.5px,#bbb 0 34.3px,#aaa 0 39.2px,#ccc 0 44.1px,#bbb 0 53.9px,#ccc 0 58.8px,#999 0 63.7px,#aaa 0 68.6px) 0 4.9px/100% 4.9px no-repeat,linear-gradient(90deg,#ddd 0 4.9px,#aaa 0 9.8px,#ccc 0 14.7px,#aaa 0 19.6px,#bbb 0 24.5px,#ddd 0 29.4px,#ccc 0 39.2px,#bbb 0 44.1px,#ccc 0 58.8px,#aaa 0 63.7px,#ccc 0 68.6px) 0 9.8px/100% 4.9px no-repeat,linear-gradient(90deg,#fff 0 4.9px,#eee 0 29.4px,#fff 0 34.3px,#eee 0 39.2px,#fff 0 44.1px,#eee 0 58.8px,#fff 0 68.6px) 0 14.7px/100% 4.9px no-repeat"></div>
<div class="mz " style="left:467px;top:4.5px;width:49.0px;height:19.6px;background:linear-gradient(90deg,#eee 0 49.0px) 0 0.0px/100% 4.9px no-repeat,linear-gradient(90deg,#ccc 0 4.9px,#888 0 9.8px,#bbb 0 14.7px,#999 0 24.5px,#aaa 0 39.2px,#ccc 0 49.0px) 0 4.9px/100% 4.9px no-repeat,linear-gradient(90deg,#ddd 0 4.9px,#777 0 9.8px,#bbb 0 14.7px,#999 0 19.6px,#bbb 0 24.5px,#ccc 0 29.4px,#bbb 0 44.1px,#ddd 0 49.0px) 0 9.8px/100% 4.9px no-repeat,linear-gradient(90deg,#fff 0 4.9px,#eee 0 29.4px,#fff 0 34.3px,#eee 0 39.2px,#fff 0 49.0px) 0 14.7px/100% 4.9px no-repeat"></div>
<span class="c" style="left:779px">0/5</span><span class="c" style="left:847.5px">4/7</span><span class="c" style="left:931.5px">-</span>
</div>
<div class="row" style="top:614.11px">
<svg class="ric" viewBox="0 0 16 16"><use href="#uadm"/></svg>
<i class="cv" style="left:42px;width:134px"></i><i class="cv" style="left:355px;width:264px"></i>
<div class="mz " style="left:51px;top:4.5px;width:151.9px;height:19.6px;background:linear-gradient(90deg,#eee 0 44.1px,#ddd 0 49.0px,#fff 0 53.9px,#eee 0 93.1px,#fff 0 98.0px,#eee 0 107.8px,#ddd 0 112.7px,#eee 0 147.0px,#fff 0 151.9px) 0 0.0px/100% 4.9px no-repeat,linear-gradient(90deg,#ccc 0 4.9px,#aaa 0 9.8px,#bbb 0 14.7px,#aaa 0 19.6px,#999 0 24.5px,#bbb 0 29.4px,#ccc 0 34.3px,#bbb 0 44.1px,#666 0 49.0px,#eee 0 53.9px,#aaa 0 58.8px,#bbb 0 63.7px,#aaa 0 78.4px,#bbb 0 83.3px,#999 0 88.2px,#ccc 0 93.1px,#eee 0 98.0px,#888 0 102.9px,#bbb 0 107.8px,#777 0 112.7px,#bbb 0 117.6px,#999 0 122.5px,#aaa 0 127.4px,#bbb 0 132.3px,#aaa 0 137.2px,#bbb 0 142.1px,#888 0 147.0px,#eee 0 151.9px) 0 4.9px/100% 4.9px no-repeat,linear-gradient(90deg,#ccc 0 9.8px,#aaa 0 14.7px,#bbb 0 24.5px,#ccc 0 29.4px,#ddd 0 34.3px,#ccc 0 39.2px,#bbb 0 44.1px,#aaa 0 49.0px,#eee 0 53.9px,#ccc 0 58.8px,#bbb 0 63.7px,#aaa 0 68.6px,#bbb 0 88.2px,#ccc 0 93.1px,#eee 0 98.0px,#888 0 102.9px,#aaa 0 107.8px,#888 0 112.7px,#bbb 0 117.6px,#aaa 0 127.4px,#bbb 0 132.3px,#ccc 0 137.2px,#aaa 0 142.1px,#999 0 147.0px,#fff 0 151.9px) 0 9.8px/100% 4.9px no-repeat,linear-gradient(90deg,#fff 0 4.9px,#eee 0 29.4px,#fff 0 34.3px,#eee 0 39.2px,#fff 0 44.1px,#eee 0 49.0px,#fff 0 58.8px,#eee 0 68.6px,#fff 0 73.5px,#eee 0 88.2px,#fff 0 98.0px,#eee 0 147.0px,#fff 0 151.9px) 0 14.7px/100% 4.9px no-repeat"></div>
<div class="mz " style="left:362px;top:4.5px;width:68.6px;height:19.6px;background:linear-gradient(90deg,#fff 0 4.9px,#eee 0 68.6px) 0 0.0px/100% 4.9px no-repeat,linear-gradient(90deg,#ccc 0 19.6px,#bbb 0 24.5px,#aaa 0 29.4px,#ccc 0 34.3px,#aaa 0 44.1px,#999 0 49.0px,#bbb 0 68.6px) 0 4.9px/100% 4.9px no-repeat,linear-gradient(90deg,#ddd 0 4.9px,#ccc 0 19.6px,#bbb 0 24.5px,#ccc 0 29.4px,#bbb 0 34.3px,#aaa 0 44.1px,#ccc 0 49.0px,#aaa 0 53.9px,#ccc 0 68.6px) 0 9.8px/100% 4.9px no-repeat,linear-gradient(90deg,#fff 0 4.9px,#eee 0 9.8px,#fff 0 14.7px,#eee 0 29.4px,#fff 0 34.3px,#eee 0 58.8px,#fff 0 68.6px) 0 14.7px/100% 4.9px no-repeat"></div>
<div class="mz " style="left:467px;top:4.5px;width:49.0px;height:19.6px;background:linear-gradient(90deg,#eee 0 49.0px) 0 0.0px/100% 4.9px no-repeat,linear-gradient(90deg,#bbb 0 9.8px,#aaa 0 14.7px,#bbb 0 19.6px,#aaa 0 24.5px,#bbb 0 29.4px,#ccc 0 34.3px,#aaa 0 39.2px,#ccc 0 44.1px,#bbb 0 49.0px) 0 4.9px/100% 4.9px no-repeat,linear-gradient(90deg,#ccc 0 14.7px,#bbb 0 24.5px,#ccc 0 39.2px,#bbb 0 44.1px,#ccc 0 49.0px) 0 9.8px/100% 4.9px no-repeat,linear-gradient(90deg,#fff 0 4.9px,#eee 0 19.6px,#fff 0 24.5px,#eee 0 39.2px,#fff 0 44.1px,#eee 0 49.0px) 0 14.7px/100% 4.9px no-repeat"></div>
<span class="c" style="left:779px">3/5</span><span class="c" style="left:847.5px">6/7</span><span class="c" style="left:931.5px">-</span>
<span class="c" style="left:1390.5px">18.09.2018</span>
</div>
<div class="row" style="top:644.78px">
<svg class="ric" viewBox="0 0 16 16"><use href="#usr"/></svg>
<i class="cv" style="left:42px;width:171px"></i><i class="cv" style="left:355px;width:264px"></i>
<div class="mz " style="left:51px;top:4.5px;width:58.8px;height:19.6px;background:linear-gradient(90deg,#eee 0 58.8px) 0 0.0px/100% 4.9px no-repeat,linear-gradient(90deg,#ddd 0 4.9px,#bbb 0 9.8px,#999 0 14.7px,#aaa 0 19.6px,#999 0 24.5px,#aaa 0 44.1px,#ccc 0 49.0px,#bbb 0 53.9px,#ccc 0 58.8px) 0 4.9px/100% 4.9px no-repeat,linear-gradient(90deg,#ddd 0 4.9px,#ccc 0 9.8px,#bbb 0 14.7px,#999 0 19.6px,#bbb 0 24.5px,#aaa 0 29.4px,#bbb 0 39.2px,#ccc 0 44.1px,#ddd 0 49.0px,#bbb 0 53.9px,#ccc 0 58.8px) 0 9.8px/100% 4.9px no-repeat,linear-gradient(90deg,#fff 0 9.8px,#eee 0 53.9px,#fff 0 58.8px) 0 14.7px/100% 4.9px no-repeat"></div>
<div class="mz " style="left:362px;top:4.5px;width:68.6px;height:19.6px;background:linear-gradient(90deg,#eee 0 68.6px) 0 0.0px/100% 4.9px no-repeat,linear-gradient(90deg,#ddd 0 4.9px,#bbb 0 14.7px,#aaa 0 19.6px,#bbb 0 24.5px,#aaa 0 29.4px,#999 0 34.3px,#bbb 0 49.0px,#888 0 53.9px,#aaa 0 63.7px,#bbb 0 68.6px) 0 4.9px/100% 4.9px no-repeat,linear-gradient(90deg,#ddd 0 4.9px,#bbb 0 24.5px,#ccc 0 29.4px,#bbb 0 34.3px,#ccc 0 39.2px,#bbb 0 44.1px,#ccc 0 49.0px,#bbb 0 53.9px,#999 0 58.8px,#bbb 0 63.7px,#ccc 0 68.6px) 0 9.8px/100% 4.9px no-repeat,linear-gradient(90deg,#fff 0 4.9px,#eee 0 39.2px,#fff 0 49.0px,#eee 0 63.7px,#fff 0 68.6px) 0 14.7px/100% 4.9px no-repeat"></div>
<div class="mz " style="left:467px;top:4.5px;width:112.7px;height:19.6px;background:linear-gradient(90deg,#fff 0 4.9px,#eee 0 14.7px,#ddd 0 19.6px,#eee 0 29.4px,#ddd 0 34.3px,#eee 0 44.1px,#fff 0 49.0px,#eee 0 83.3px,#fff 0 88.2px,#eee 0 112.7px) 0 0.0px/100% 4.9px no-repeat,linear-gradient(90deg,#ccc 0 4.9px,#bbb 0 9.8px,#999 0 19.6px,#bbb 0 24.5px,#999 0 29.4px,#888 0 34.3px,#aaa 0 39.2px,#bbb 0 44.1px,#eee 0 49.0px,#bbb 0 53.9px,#777 0 58.8px,#999 0 63.7px,#bbb 0 83.3px,#eee 0 88.2px,#ccc 0 93.1px,#aaa 0 98.0px,#bbb 0 102.9px,#aaa 0 107.8px,#bbb 0 112.7px) 0 4.9px/100% 4.9px no-repeat,linear-gradient(90deg,#ddd 0 4.9px,#ccc 0 9.8px,#888 0 14.7px,#999 0 19.6px,#ccc 0 24.5px,#bbb 0 29.4px,#999 0 34.3px,#bbb 0 44.1px,#eee 0 49.0px,#bbb 0 53.9px,#888 0 58.8px,#ccc 0 68.6px,#aaa 0 78.4px,#bbb 0 83.3px,#eee 0 88.2px,#ccc 0 93.1px,#999 0 98.0px,#ccc 0 102.9px,#bbb 0 112.7px) 0 9.8px/100% 4.9px no-repeat,linear-gradient(90deg,#fff 0 4.9px,#eee 0 44.1px,#fff 0 49.0px,#eee 0 58.8px,#fff 0 63.7px,#eee 0 83.3px,#fff 0 93.1px,#eee 0 112.7px) 0 14.7px/100% 4.9px no-repeat"></div>
<span class="c" style="left:779px">0/5</span><span class="c" style="left:847.5px">4/7</span><span class="c" style="left:931.5px">-</span>
</div>
<div class="row" style="top:675.45px">
<svg class="ric" viewBox="0 0 16 16"><use href="#uadm"/></svg>
<i class="cv" style="left:42px;width:171px"></i><i class="cv" style="left:355px;width:264px"></i>
<div class="mz " style="left:51px;top:4.5px;width:83.3px;height:19.6px;background:linear-gradient(90deg,#eee 0 29.4px,#fff 0 34.3px,#ddd 0 39.2px,#eee 0 58.8px,#fff 0 63.7px,#eee 0 83.3px) 0 0.0px/100% 4.9px no-repeat,linear-gradient(90deg,#bbb 0 4.9px,#aaa 0 14.7px,#ccc 0 19.6px,#aaa 0 24.5px,#ccc 0 29.4px,#eee 0 34.3px,#666 0 39.2px,#888 0 44.1px,#bbb 0 58.8px,#eee 0 63.7px,#999 0 68.6px,#bbb 0 73.5px,#aaa 0 78.4px,#ccc 0 83.3px) 0 4.9px/100% 4.9px no-repeat,linear-gradient(90deg,#bbb 0 4.9px,#aaa 0 9.8px,#bbb 0 14.7px,#ccc 0 19.6px,#bbb 0 24.5px,#ddd 0 29.4px,#eee 0 34.3px,#aaa 0 39.2px,#bbb 0 49.0px,#ccc 0 53.9px,#bbb 0 58.8px,#eee 0 63.7px,#bbb 0 68.6px,#ccc 0 83.3px) 0 9.8px/100% 4.9px no-repeat,linear-gradient(90deg,#eee 0 19.6px,#fff 0 34.3px,#eee 0 58.8px,#fff 0 63.7px,#eee 0 68.6px,#fff 0 73.5px,#eee 0 78.4px,#fff 0 83.3px) 0 14.7px/100% 4.9px no-repeat"></div>
<div class="mz " style="left:362px;top:4.5px;width:68.6px;height:19.6px;background:linear-gradient(90deg,#eee 0 19.6px,#ddd 0 24.5px,#eee 0 68.6px) 0 0.0px/100% 4.9px no-repeat,linear-gradient(90deg,#ddd 0 4.9px,#ccc 0 19.6px,#777 0 24.5px,#999 0 29.4px,#bbb 0 34.3px,#999 0 39.2px,#ccc 0 49.0px,#999 0 53.9px,#aaa 0 68.6px) 0 4.9px/100% 4.9px no-repeat,linear-gradient(90deg,#ddd 0 4.9px,#bbb 0 9.8px,#ccc 0 19.6px,#aaa 0 24.5px,#bbb 0 29.4px,#aaa 0 39.2px,#bbb 0 49.0px,#ccc 0 68.6px) 0 9.8px/100% 4.9px no-repeat,linear-gradient(90deg,#fff 0 19.6px,#eee 0 29.4px,#fff 0 34.3px,#eee 0 49.0px,#fff 0 53.9px,#eee 0 58.8px,#fff 0 63.7px,#eee 0 68.6px) 0 14.7px/100% 4.9px no-repeat"></div>
<div class="mz " style="left:467px;top:4.5px;width:49.0px;height:19.6px;background:linear-gradient(90deg,#fff 0 4.9px,#eee 0 49.0px) 0 0.0px/100% 4.9px no-repeat,linear-gradient(90deg,#ccc 0 4.9px,#aaa 0 14.7px,#999 0 19.6px,#aaa 0 24.5px,#999 0 29.4px,#bbb 0 49.0px) 0 4.9px/100% 4.9px no-repeat,linear-gradient(90deg,#ddd 0 4.9px,#bbb 0 9.8px,#aaa 0 19.6px,#bbb 0 39.2px,#ccc 0 44.1px,#bbb 0 49.0px) 0 9.8px/100% 4.9px no-repeat,linear-gradient(90deg,#fff 0 4.9px,#eee 0 14.7px,#fff 0 19.6px,#eee 0 39.2px,#fff 0 44.1px,#eee 0 49.0px) 0 14.7px/100% 4.9px no-repeat"></div>
<span class="c" style="left:779px">1/5</span><span class="c" style="left:847.5px">6/7</span><span class="c" style="left:931.5px">-</span>
<span class="c" style="left:1390.5px">21.09.2018</span>
<i class="lg" style="background:#ff80ab"></i>
</div>
<div class="row" style="top:706.12px">
<svg class="ric" viewBox="0 0 16 16"><use href="#uadm"/></svg>
<i class="cv" style="left:42px;width:171px"></i><i class="cv" style="left:355px;width:264px"></i>
<div class="mz " style="left:51px;top:4.5px;width:93.1px;height:19.6px;background:linear-gradient(90deg,#eee 0 39.2px,#fff 0 44.1px,#eee 0 63.7px,#fff 0 68.6px,#eee 0 88.2px,#fff 0 93.1px) 0 0.0px/100% 4.9px no-repeat,linear-gradient(90deg,#bbb 0 4.9px,#888 0 9.8px,#ccc 0 14.7px,#bbb 0 29.4px,#999 0 39.2px,#eee 0 44.1px,#aaa 0 49.0px,#bbb 0 53.9px,#999 0 63.7px,#eee 0 68.6px,#888 0 73.5px,#666 0 78.4px,#ccc 0 88.2px,#eee 0 93.1px) 0 4.9px/100% 4.9px no-repeat,linear-gradient(90deg,#ddd 0 4.9px,#aaa 0 9.8px,#ccc 0 14.7px,#aaa 0 24.5px,#bbb 0 29.4px,#aaa 0 39.2px,#eee 0 44.1px,#aaa 0 49.0px,#ccc 0 53.9px,#aaa 0 58.8px,#bbb 0 63.7px,#eee 0 68.6px,#aaa 0 78.4px,#ccc 0 88.2px,#fff 0 93.1px) 0 9.8px/100% 4.9px no-repeat,linear-gradient(90deg,#fff 0 4.9px,#eee 0 19.6px,#fff 0 24.5px,#eee 0 39.2px,#fff 0 44.1px,#eee 0 53.9px,#fff 0 58.8px,#eee 0 63.7px,#fff 0 68.6px,#eee 0 78.4px,#fff 0 83.3px,#eee 0 88.2px,#fff 0 93.1px) 0 14.7px/100% 4.9px no-repeat"></div>
<div class="mz " style="left:362px;top:4.5px;width:68.6px;height:19.6px;background:linear-gradient(90deg,#eee 0 63.7px,#fff 0 68.6px) 0 0.0px/100% 4.9px no-repeat,linear-gradient(90deg,#ccc 0 4.9px,#bbb 0 9.8px,#aaa 0 19.6px,#bbb 0 24.5px,#ccc 0 29.4px,#bbb 0 39.2px,#aaa 0 44.1px,#999 0 49.0px,#888 0 53.9px,#ccc 0 58.8px,#bbb 0 68.6px) 0 4.9px/100% 4.9px no-repeat,linear-gradient(90deg,#ddd 0 4.9px,#ccc 0 9.8px,#aaa 0 14.7px,#ccc 0 19.6px,#bbb 0 24.5px,#ccc 0 29.4px,#bbb 0 34.3px,#aaa 0 39.2px,#bbb 0 49.0px,#999 0 53.9px,#ccc 0 58.8px,#aaa 0 63.7px,#ccc 0 68.6px) 0 9.8px/100% 4.9px no-repeat,linear-gradient(90deg,#fff 0 9.8px,#eee 0 24.5px,#fff 0 29.4px,#eee 0 53.9px,#fff 0 58.8px,#eee 0 63.7px,#fff 0 68.6px) 0 14.7px/100% 4.9px no-repeat"></div>
<div class="mz " style="left:467px;top:4.5px;width:142.1px;height:19.6px;background:linear-gradient(90deg,#eee 0 29.4px,#fff 0 34.3px,#eee 0 63.7px,#fff 0 68.6px,#eee 0 93.1px,#fff 0 98.0px,#eee 0 102.9px,#ddd 0 107.8px,#eee 0 132.3px,#fff 0 137.2px,#eee 0 142.1px) 0 0.0px/100% 4.9px no-repeat,linear-gradient(90deg,#ccc 0 4.9px,#bbb 0 14.7px,#aaa 0 19.6px,#bbb 0 29.4px,#eee 0 34.3px,#999 0 39.2px,#aaa 0 58.8px,#bbb 0 63.7px,#eee 0 68.6px,#bbb 0 73.5px,#ccc 0 78.4px,#aaa 0 83.3px,#bbb 0 93.1px,#eee 0 98.0px,#aaa 0 102.9px,#888 0 107.8px,#aaa 0 112.7px,#ccc 0 117.6px,#999 0 122.5px,#bbb 0 132.3px,#eee 0 137.2px,#ccc 0 142.1px) 0 4.9px/100% 4.9px no-repeat,linear-gradient(90deg,#ccc 0 14.7px,#aaa 0 19.6px,#ccc 0 24.5px,#bbb 0 29.4px,#eee 0 34.3px,#bbb 0 39.2px,#ccc 0 44.1px,#bbb 0 49.0px,#ccc 0 53.9px,#bbb 0 63.7px,#eee 0 68.6px,#bbb 0 93.1px,#eee 0 98.0px,#bbb 0 102.9px,#888 0 107.8px,#aaa 0 112.7px,#bbb 0 117.6px,#aaa 0 122.5px,#bbb 0 127.4px,#aaa 0 132.3px,#eee 0 137.2px,#ccc 0 142.1px) 0 9.8px/100% 4.9px no-repeat,linear-gradient(90deg,#fff 0 9.8px,#eee 0 24.5px,#fff 0 34.3px,#eee 0 39.2px,#fff 0 49.0px,#eee 0 63.7px,#fff 0 68.6px,#eee 0 73.5px,#fff 0 78.4px,#eee 0 93.1px,#fff 0 98.0px,#eee 0 122.5px,#fff 0 127.4px,#eee 0 132.3px,#fff 0 137.2px,#eee 0 142.1px) 0 14.7px/100% 4.9px no-repeat"></div>
<span class="c" style="left:779px">1/5</span><span class="c" style="left:847.5px">6/7</span><span class="c" style="left:931.5px">-</span>
<i class="lg" style="background:#ff80ab"></i>
</div>
<div class="row" style="top:736.79px">
<svg class="ric" viewBox="0 0 16 16"><use href="#usr"/></svg>
<i class="cv" style="left:42px;width:171px"></i><i class="cv" style="left:355px;width:264px"></i>
<div class="mz " style="left:51px;top:4.5px;width:83.3px;height:19.6px;background:linear-gradient(90deg,#eee 0 44.1px,#fff 0 49.0px,#eee 0 78.4px,#fff 0 83.3px) 0 0.0px/100% 4.9px no-repeat,linear-gradient(90deg,#ccc 0 4.9px,#aaa 0 24.5px,#bbb 0 29.4px,#aaa 0 34.3px,#ccc 0 39.2px,#bbb 0 44.1px,#eee 0 49.0px,#aaa 0 58.8px,#ccc 0 63.7px,#777 0 68.6px,#aaa 0 73.5px,#ccc 0 83.3px) 0 4.9px/100% 4.9px no-repeat,linear-gradient(90deg,#ddd 0 4.9px,#bbb 0 9.8px,#aaa 0 14.7px,#bbb 0 19.6px,#ccc 0 24.5px,#aaa 0 29.4px,#bbb 0 34.3px,#ccc 0 39.2px,#aaa 0 44.1px,#eee 0 49.0px,#ccc 0 53.9px,#bbb 0 63.7px,#aaa 0 68.6px,#bbb 0 73.5px,#aaa 0 78.4px,#ddd 0 83.3px) 0 9.8px/100% 4.9px no-repeat,linear-gradient(90deg,#fff 0 4.9px,#eee 0 39.2px,#fff 0 49.0px,#eee 0 78.4px,#fff 0 83.3px) 0 14.7px/100% 4.9px no-repeat"></div>
<div class="mz " style="left:362px;top:4.5px;width:68.6px;height:19.6px;background:linear-gradient(90deg,#fff 0 4.9px,#eee 0 68.6px) 0 0.0px/100% 4.9px no-repeat,linear-gradient(90deg,#ccc 0 4.9px,#bbb 0 9.8px,#999 0 14.7px,#bbb 0 29.4px,#999 0 34.3px,#bbb 0 39.2px,#999 0 44.1px,#ccc 0 49.0px,#999 0 53.9px,#bbb 0 68.6px) 0 4.9px/100% 4.9px no-repeat,linear-gradient(90deg,#ccc 0 4.9px,#bbb 0 9.8px,#aaa 0 14.7px,#ccc 0 19.6px,#ddd 0 24.5px,#bbb 0 34.3px,#ccc 0 44.1px,#bbb 0 49.0px,#ccc 0 53.9px,#bbb 0 63.7px,#ccc 0 68.6px) 0 9.8px/100% 4.9px no-repeat,linear-gradient(90deg,#fff 0 4.9px,#eee 0 19.6px,#fff 0 24.5px,#eee 0 34.3px,#fff 0 44.1px,#eee 0 58.8px,#fff 0 68.6px) 0 14.7px/100% 4.9px no-repeat"></div>
<div class="mz " style="left:467px;top:4.5px;width:98.0px;height:19.6px;background:linear-gradient(90deg,#eee 0 14.7px,#ddd 0 19.6px,#eee 0 29.4px,#fff 0 34.3px,#eee 0 53.9px,#fff 0 58.8px,#eee 0 98.0px) 0 0.0px/100% 4.9px no-repeat,linear-gradient(90deg,#bbb 0 4.9px,#888 0 9.8px,#aaa 0 14.7px,#999 0 19.6px,#bbb 0 24.5px,#aaa 0 29.4px,#eee 0 34.3px,#bbb 0 39.2px,#aaa 0 44.1px,#bbb 0 53.9px,#eee 0 58.8px,#999 0 68.6px,#777 0 73.5px,#aaa 0 78.4px,#bbb 0 83.3px,#aaa 0 88.2px,#ccc 0 93.1px,#ddd 0 98.0px) 0 4.9px/100% 4.9px no-repeat,linear-gradient(90deg,#ccc 0 4.9px,#aaa 0 19.6px,#bbb 0 24.5px,#aaa 0 29.4px,#eee 0 34.3px,#bbb 0 39.2px,#ccc 0 44.1px,#bbb 0 53.9px,#eee 0 58.8px,#ccc 0 63.7px,#bbb 0 68.6px,#aaa 0 78.4px,#ccc 0 93.1px,#ddd 0 98.0px) 0 9.8px/100% 4.9px no-repeat,linear-gradient(90deg,#fff 0 4.9px,#eee 0 29.4px,#fff 0 44.1px,#eee 0 49.0px,#fff 0 58.8px,#eee 0 88.2px,#fff 0 98.0px) 0 14.7px/100% 4.9px no-repeat"></div>
<span class="c" style="left:779px">0/5</span><span class="c" style="left:847.5px">4/7</span><span class="c" style="left:931.5px">-</span>
</div>
<div class="row" style="top:767.46px">
<svg class="ric" viewBox="0 0 16 16"><use href="#uadm"/></svg>
<i class="cv" style="left:42px;width:171px"></i><i class="cv" style="left:355px;width:264px"></i>
<div class="mz " style="left:51px;top:4.5px;width:49.0px;height:19.6px;background:linear-gradient(90deg,#eee 0 29.4px,#ddd 0 34.3px,#eee 0 49.0px) 0 0.0px/100% 4.9px no-repeat,linear-gradient(90deg,#ddd 0 4.9px,#bbb 0 9.8px,#aaa 0 14.7px,#ccc 0 19.6px,#bbb 0 29.4px,#999 0 39.2px,#777 0 44.1px,#ddd 0 49.0px) 0 4.9px/100% 4.9px no-repeat,linear-gradient(90deg,#eee 0 4.9px,#bbb 0 14.7px,#ccc 0 29.4px,#999 0 39.2px,#bbb 0 44.1px,#ddd 0 49.0px) 0 9.8px/100% 4.9px no-repeat,linear-gradient(90deg,#fff 0 4.9px,#eee 0 9.8px,#fff 0 19.6px,#eee 0 44.1px,#fff 0 49.0px) 0 14.7px/100% 4.9px no-repeat"></div>
<div class="mz " style="left:362px;top:4.5px;width:68.6px;height:19.6px;background:linear-gradient(90deg,#eee 0 68.6px) 0 0.0px/100% 4.9px no-repeat,linear-gradient(90deg,#ccc 0 4.9px,#bbb 0 9.8px,#aaa 0 14.7px,#999 0 19.6px,#bbb 0 34.3px,#aaa 0 44.1px,#ccc 0 49.0px,#aaa 0 53.9px,#bbb 0 58.8px,#aaa 0 63.7px,#ccc 0 68.6px) 0 4.9px/100% 4.9px no-repeat,linear-gradient(90deg,#ddd 0 4.9px,#bbb 0 9.8px,#aaa 0 19.6px,#ccc 0 29.4px,#bbb 0 44.1px,#ccc 0 49.0px,#bbb 0 53.9px,#ccc 0 58.8px,#bbb 0 63.7px,#ddd 0 68.6px) 0 9.8px/100% 4.9px no-repeat,linear-gradient(90deg,#eee 0 9.8px,#fff 0 14.7px,#eee 0 39.2px,#fff 0 44.1px,#eee 0 63.7px,#fff 0 68.6px) 0 14.7px/100% 4.9px no-repeat"></div>
<div class="mz " style="left:467px;top:4.5px;width:68.6px;height:19.6px;background:linear-gradient(90deg,#fff 0 4.9px,#eee 0 19.6px,#ddd 0 24.5px,#eee 0 68.6px) 0 0.0px/100% 4.9px no-repeat,linear-gradient(90deg,#ddd 0 4.9px,#888 0 9.8px,#ccc 0 14.7px,#aaa 0 19.6px,#777 0 24.5px,#aaa 0 34.3px,#bbb 0 39.2px,#999 0 44.1px,#bbb 0 58.8px,#aaa 0 63.7px,#ccc 0 68.6px) 0 4.9px/100% 4.9px no-repeat,linear-gradient(90deg,#ddd 0 4.9px,#888 0 9.8px,#ddd 0 14.7px,#bbb 0 19.6px,#999 0 24.5px,#bbb 0 34.3px,#aaa 0 39.2px,#bbb 0 49.0px,#ddd 0 53.9px,#bbb 0 63.7px,#ccc 0 68.6px) 0 9.8px/100% 4.9px no-repeat,linear-gradient(90deg,#fff 0 4.9px,#eee 0 9.8px,#fff 0 14.7px,#eee 0 39.2px,#fff 0 49.0px,#eee 0 53.9px,#fff 0 58.8px,#eee 0 63.7px,#fff 0 68.6px) 0 14.7px/100% 4.9px no-repeat"></div>
<span class="c" style="left:779px">3/5</span><span class="c" style="left:847.5px">6/7</span><span class="c" style="left:931.5px">-</span>
<span class="c" style="left:1390.5px">11.09.2018</span>
<i class="lg" style="background:#ff8a80"></i>
</div>
<div class="row" style="top:798.13px">
<svg class="ric" viewBox="0 0 16 16"><use href="#uadm"/></svg>
<i class="cv" style="left:42px;width:171px"></i><i class="cv" style="left:355px;width:264px"></i>
<div class="mz " style="left:51px;top:4.5px;width:156.8px;height:19.6px;background:linear-gradient(90deg,#eee 0 49.0px,#fff 0 53.9px,#eee 0 102.9px,#fff 0 107.8px,#eee 0 117.6px,#ddd 0 122.5px,#eee 0 156.8px) 0 0.0px/100% 4.9px no-repeat,linear-gradient(90deg,#aaa 0 4.9px,#999 0 9.8px,#bbb 0 24.5px,#aaa 0 29.4px,#bbb 0 34.3px,#ccc 0 44.1px,#aaa 0 49.0px,#eee 0 53.9px,#bbb 0 63.7px,#999 0 68.6px,#bbb 0 73.5px,#999 0 78.4px,#aaa 0 83.3px,#bbb 0 88.2px,#aaa 0 93.1px,#ccc 0 98.0px,#aaa 0 102.9px,#eee 0 107.8px,#aaa 0 117.6px,#777 0 122.5px,#999 0 127.4px,#777 0 132.3px,#aaa 0 137.2px,#999 0 147.0px,#bbb 0 156.8px) 0 4.9px/100% 4.9px no-repeat,linear-gradient(90deg,#ccc 0 4.9px,#bbb 0 9.8px,#999 0 14.7px,#aaa 0 24.5px,#999 0 29.4px,#bbb 0 34.3px,#ccc 0 39.2px,#ddd 0 44.1px,#bbb 0 49.0px,#eee 0 53.9px,#ccc 0 58.8px,#ddd 0 63.7px,#ccc 0 73.5px,#aaa 0 78.4px,#ccc 0 88.2px,#bbb 0 98.0px,#aaa 0 102.9px,#eee 0 107.8px,#bbb 0 117.6px,#888 0 122.5px,#ccc 0 127.4px,#aaa 0 132.3px,#bbb 0 151.9px,#ddd 0 156.8px) 0 9.8px/100% 4.9px no-repeat,linear-gradient(90deg,#fff 0 9.8px,#eee 0 14.7px,#fff 0 19.6px,#eee 0 49.0px,#fff 0 58.8px,#eee 0 68.6px,#fff 0 73.5px,#eee 0 93.1px,#fff 0 98.0px,#eee 0 102.9px,#fff 0 107.8px,#eee 0 142.1px,#fff 0 147.0px,#eee 0 151.9px,#fff 0 156.8px) 0 14.7px/100% 4.9px no-repeat"></div>
<div class="mz " style="left:362px;top:4.5px;width:68.6px;height:19.6px;background:linear-gradient(90deg,#fff 0 4.9px,#eee 0 68.6px) 0 0.0px/100% 4.9px no-repeat,linear-gradient(90deg,#ddd 0 4.9px,#999 0 14.7px,#bbb 0 19.6px,#888 0 24.5px,#aaa 0 29.4px,#999 0 34.3px,#bbb 0 44.1px,#ccc 0 53.9px,#bbb 0 63.7px,#ccc 0 68.6px) 0 4.9px/100% 4.9px no-repeat,linear-gradient(90deg,#eee 0 4.9px,#bbb 0 9.8px,#aaa 0 14.7px,#bbb 0 19.6px,#888 0 24.5px,#aaa 0 34.3px,#bbb 0 39.2px,#ccc 0 53.9px,#bbb 0 58.8px,#ddd 0 63.7px,#ccc 0 68.6px) 0 9.8px/100% 4.9px no-repeat,linear-gradient(90deg,#fff 0 4.9px,#eee 0 44.1px,#fff 0 53.9px,#eee 0 58.8px,#fff 0 68.6px) 0 14.7px/100% 4.9px no-repeat"></div>
<div class="mz " style="left:467px;top:4.5px;width:49.0px;height:19.6px;background:linear-gradient(90deg,#fff 0 4.9px,#eee 0 14.7px,#ddd 0 19.6px,#eee 0 44.1px,#fff 0 49.0px) 0 0.0px/100% 4.9px no-repeat,linear-gradient(90deg,#ccc 0 4.9px,#aaa 0 9.8px,#bbb 0 14.7px,#999 0 19.6px,#ccc 0 24.5px,#888 0 29.4px,#aaa 0 34.3px,#bbb 0 39.2px,#999 0 44.1px,#ccc 0 49.0px) 0 4.9px/100% 4.9px no-repeat,linear-gradient(90deg,#ddd 0 4.9px,#ccc 0 9.8px,#aaa 0 14.7px,#888 0 19.6px,#ccc 0 24.5px,#bbb 0 29.4px,#ccc 0 39.2px,#aaa 0 44.1px,#ddd 0 49.0px) 0 9.8px/100% 4.9px no-repeat,linear-gradient(90deg,#fff 0 9.8px,#eee 0 44.1px,#fff 0 49.0px) 0 14.7px/100% 4.9px no-repeat"></div>
<span class="c" style="left:779px">3/5</span><span class="c" style="left:847.5px">6/7</span><span class="c" style="left:931.5px">-</span>
<span class="c" style="left:1390.5px">21.09.2018</span>
</div>
<div class="row" style="top:828.80px">
<svg class="ric" viewBox="0 0 16 16"><use href="#usr"/></svg>
<i class="cv" style="left:42px;width:171px"></i><i class="cv" style="left:355px;width:264px"></i>
<div class="mz " style="left:51px;top:4.5px;width:122.5px;height:19.6px;background:linear-gradient(90deg,#eee 0 39.2px,#fff 0 44.1px,#eee 0 63.7px,#fff 0 68.6px,#eee 0 117.6px,#fff 0 122.5px) 0 0.0px/100% 4.9px no-repeat,linear-gradient(90deg,#aaa 0 4.9px,#999 0 9.8px,#aaa 0 14.7px,#ccc 0 19.6px,#999 0 24.5px,#aaa 0 29.4px,#999 0 34.3px,#aaa 0 39.2px,#eee 0 44.1px,#bbb 0 49.0px,#aaa 0 53.9px,#bbb 0 58.8px,#ccc 0 63.7px,#eee 0 68.6px,#999 0 73.5px,#bbb 0 78.4px,#ccc 0 83.3px,#bbb 0 93.1px,#ccc 0 98.0px,#aaa 0 102.9px,#ccc 0 107.8px,#999 0 112.7px,#bbb 0 117.6px,#fff 0 122.5px) 0 4.9px/100% 4.9px no-repeat,linear-gradient(90deg,#ccc 0 4.9px,#aaa 0 9.8px,#ccc 0 14.7px,#bbb 0 29.4px,#aaa 0 34.3px,#bbb 0 39.2px,#eee 0 44.1px,#bbb 0 58.8px,#ccc 0 63.7px,#eee 0 68.6px,#999 0 73.5px,#ccc 0 78.4px,#ddd 0 83.3px,#bbb 0 88.2px,#aaa 0 93.1px,#bbb 0 98.0px,#aaa 0 102.9px,#ccc 0 107.8px,#999 0 112.7px,#bbb 0 117.6px,#fff 0 122.5px) 0 9.8px/100% 4.9px no-repeat,linear-gradient(90deg,#fff 0 4.9px,#eee 0 19.6px,#fff 0 24.5px,#eee 0 29.4px,#fff 0 34.3px,#eee 0 39.2px,#fff 0 44.1px,#eee 0 53.9px,#fff 0 68.6px,#eee 0 73.5px,#fff 0 83.3px,#eee 0 93.1px,#fff 0 98.0px,#eee 0 117.6px,#fff 0 122.5px) 0 14.7px/100% 4.9px no-repeat"></div>
<div class="mz " style="left:362px;top:4.5px;width:68.6px;height:19.6px;background:linear-gradient(90deg,#fff 0 4.9px,#eee 0 24.5px,#ddd 0 29.4px,#eee 0 63.7px,#fff 0 68.6px) 0 0.0px/100% 4.9px no-repeat,linear-gradient(90deg,#ddd 0 4.9px,#aaa 0 9.8px,#999 0 14.7px,#bbb 0 24.5px,#777 0 29.4px,#ccc 0 34.3px,#aaa 0 39.2px,#999 0 49.0px,#bbb 0 63.7px,#ddd 0 68.6px) 0 4.9px/100% 4.9px no-repeat,linear-gradient(90deg,#ccc 0 9.8px,#bbb 0 19.6px,#aaa 0 24.5px,#888 0 29.4px,#ddd 0 34.3px,#bbb 0 44.1px,#ccc 0 49.0px,#aaa 0 53.9px,#ccc 0 58.8px,#bbb 0 63.7px,#ddd 0 68.6px) 0 9.8px/100% 4.9px no-repeat,linear-gradient(90deg,#fff 0 4.9px,#eee 0 29.4px,#fff 0 39.2px,#eee 0 63.7px,#fff 0 68.6px) 0 14.7px/100% 4.9px no-repeat"></div>
<div class="mz " style="left:467px;top:4.5px;width:68.6px;height:19.6px;background:linear-gradient(90deg,#eee 0 68.6px) 0 0.0px/100% 4.9px no-repeat,linear-gradient(90deg,#ccc 0 4.9px,#bbb 0 9.8px,#aaa 0 19.6px,#999 0 24.5px,#bbb 0 34.3px,#777 0 39.2px,#bbb 0 44.1px,#ccc 0 49.0px,#999 0 53.9px,#aaa 0 58.8px,#bbb 0 68.6px) 0 4.9px/100% 4.9px no-repeat,linear-gradient(90deg,#ccc 0 9.8px,#bbb 0 19.6px,#aaa 0 24.5px,#bbb 0 29.4px,#aaa 0 34.3px,#888 0 39.2px,#ccc 0 44.1px,#bbb 0 49.0px,#aaa 0 53.9px,#bbb 0 63.7px,#ccc 0 68.6px) 0 9.8px/100% 4.9px no-repeat,linear-gradient(90deg,#fff 0 4.9px,#eee 0 24.5px,#fff 0 29.4px,#eee 0 39.2px,#fff 0 44.1px,#eee 0 58.8px,#fff 0 63.7px,#eee 0 68.6px) 0 14.7px/100% 4.9px no-repeat"></div>
<span class="c" style="left:779px">0/5</span><span class="c" style="left:847.5px">6/7</span><span class="c" style="left:931.5px">-</span>
<span class="c" style="left:1390.5px">23.05.2018</span>
</div>
<div class="row" style="top:859.47px">
<svg class="ric" viewBox="0 0 16 16"><use href="#usr"/></svg>
<i class="cv" style="left:42px;width:171px"></i><i class="cv" style="left:355px;width:264px"></i>
<div class="mz " style="left:51px;top:4.5px;width:93.1px;height:19.6px;background:linear-gradient(90deg,#eee 0 29.4px,#fff 0 34.3px,#eee 0 73.5px,#fff 0 78.4px,#eee 0 93.1px) 0 0.0px/100% 4.9px no-repeat,linear-gradient(90deg,#ddd 0 4.9px,#888 0 9.8px,#aaa 0 14.7px,#bbb 0 19.6px,#999 0 29.4px,#eee 0 34.3px,#bbb 0 39.2px,#ccc 0 49.0px,#bbb 0 53.9px,#ccc 0 58.8px,#bbb 0 68.6px,#aaa 0 73.5px,#eee 0 78.4px,#bbb 0 83.3px,#999 0 88.2px,#ccc 0 93.1px) 0 4.9px/100% 4.9px no-repeat,linear-gradient(90deg,#ccc 0 4.9px,#aaa 0 9.8px,#ccc 0 14.7px,#bbb 0 29.4px,#eee 0 34.3px,#aaa 0 39.2px,#ddd 0 44.1px,#bbb 0 49.0px,#aaa 0 53.9px,#ccc 0 58.8px,#bbb 0 68.6px,#aaa 0 73.5px,#eee 0 78.4px,#aaa 0 83.3px,#999 0 88.2px,#ccc 0 93.1px) 0 9.8px/100% 4.9px no-repeat,linear-gradient(90deg,#fff 0 4.9px,#eee 0 14.7px,#fff 0 19.6px,#eee 0 24.5px,#fff 0 34.3px,#eee 0 39.2px,#fff 0 53.9px,#eee 0 63.7px,#fff 0 68.6px,#eee 0 73.5px,#fff 0 78.4px,#eee 0 88.2px,#fff 0 93.1px) 0 14.7px/100% 4.9px no-repeat"></div>
<div class="mz " style="left:362px;top:4.5px;width:68.6px;height:19.6px;background:linear-gradient(90deg,#eee 0 68.6px) 0 0.0px/100% 4.9px no-repeat,linear-gradient(90deg,#ddd 0 4.9px,#aaa 0 9.8px,#999 0 14.7px,#bbb 0 19.6px,#999 0 24.5px,#aaa 0 34.3px,#888 0 39.2px,#aaa 0 49.0px,#bbb 0 53.9px,#999 0 58.8px,#bbb 0 63.7px,#ccc 0 68.6px) 0 4.9px/100% 4.9px no-repeat,linear-gradient(90deg,#eee 0 4.9px,#bbb 0 14.7px,#aaa 0 19.6px,#bbb 0 24.5px,#aaa 0 29.4px,#bbb 0 34.3px,#aaa 0 39.2px,#bbb 0 53.9px,#aaa 0 58.8px,#bbb 0 63.7px,#ddd 0 68.6px) 0 9.8px/100% 4.9px no-repeat,linear-gradient(90deg,#fff 0 4.9px,#eee 0 63.7px,#fff 0 68.6px) 0 14.7px/100% 4.9px no-repeat"></div>
<div class="mz " style="left:467px;top:4.5px;width:88.2px;height:19.6px;background:linear-gradient(90deg,#eee 0 24.5px,#fff 0 29.4px,#eee 0 44.1px,#ddd 0 49.0px,#eee 0 78.4px,#fff 0 83.3px,#eee 0 88.2px) 0 0.0px/100% 4.9px no-repeat,linear-gradient(90deg,#ccc 0 4.9px,#aaa 0 9.8px,#bbb 0 14.7px,#aaa 0 19.6px,#bbb 0 24.5px,#eee 0 29.4px,#aaa 0 34.3px,#888 0 39.2px,#ccc 0 44.1px,#888 0 53.9px,#ccc 0 63.7px,#bbb 0 73.5px,#aaa 0 78.4px,#eee 0 83.3px,#ccc 0 88.2px) 0 4.9px/100% 4.9px no-repeat,linear-gradient(90deg,#ddd 0 4.9px,#ccc 0 19.6px,#aaa 0 24.5px,#eee 0 29.4px,#aaa 0 39.2px,#bbb 0 44.1px,#999 0 49.0px,#aaa 0 53.9px,#ccc 0 58.8px,#aaa 0 63.7px,#ccc 0 78.4px,#eee 0 83.3px,#ccc 0 88.2px) 0 9.8px/100% 4.9px no-repeat,linear-gradient(90deg,#eee 0 4.9px,#fff 0 9.8px,#eee 0 14.7px,#fff 0 19.6px,#eee 0 24.5px,#fff 0 29.4px,#eee 0 39.2px,#fff 0 44.1px,#eee 0 53.9px,#fff 0 58.8px,#eee 0 78.4px,#fff 0 88.2px) 0 14.7px/100% 4.9px no-repeat"></div>
<span class="c" style="left:779px">0/5</span><span class="c" style="left:847.5px">4/7</span><span class="c" style="left:931.5px">-</span>
</div>
<div class="row" style="top:890.14px">
<svg class="ric" viewBox="0 0 16 16"><use href="#uadm"/></svg>
<i class="cv" style="left:42px;width:171px"></i><i class="cv" style="left:355px;width:264px"></i>
<div class="mz " style="left:51px;top:4.5px;width:78.4px;height:19.6px;background:linear-gradient(90deg,#eee 0 49.0px,#fff 0 53.9px,#eee 0 78.4px) 0 0.0px/100% 4.9px no-repeat,linear-gradient(90deg,#ddd 0 4.9px,#bbb 0 14.7px,#999 0 19.6px,#bbb 0 24.5px,#888 0 29.4px,#bbb 0 34.3px,#aaa 0 44.1px,#ccc 0 49.0px,#eee 0 53.9px,#bbb 0 58.8px,#999 0 63.7px,#ccc 0 68.6px,#999 0 73.5px,#ccc 0 78.4px) 0 4.9px/100% 4.9px no-repeat,linear-gradient(90deg,#ddd 0 4.9px,#bbb 0 14.7px,#ccc 0 19.6px,#bbb 0 24.5px,#aaa 0 44.1px,#ccc 0 49.0px,#eee 0 53.9px,#ccc 0 58.8px,#aaa 0 63.7px,#bbb 0 73.5px,#ccc 0 78.4px) 0 9.8px/100% 4.9px no-repeat,linear-gradient(90deg,#fff 0 9.8px,#eee 0 44.1px,#fff 0 53.9px,#eee 0 58.8px,#fff 0 68.6px,#eee 0 73.5px,#fff 0 78.4px) 0 14.7px/100% 4.9px no-repeat"></div>
<div class="mz " style="left:362px;top:4.5px;width:68.6px;height:19.6px;background:linear-gradient(90deg,#eee 0 68.6px) 0 0.0px/100% 4.9px no-repeat,linear-gradient(90deg,#ddd 0 4.9px,#bbb 0 14.7px,#999 0 19.6px,#ccc 0 24.5px,#888 0 29.4px,#999 0 34.3px,#aaa 0 39.2px,#bbb 0 44.1px,#666 0 49.0px,#bbb 0 53.9px,#999 0 58.8px,#bbb 0 63.7px,#aaa 0 68.6px) 0 4.9px/100% 4.9px no-repeat,linear-gradient(90deg,#ddd 0 4.9px,#ccc 0 14.7px,#bbb 0 24.5px,#aaa 0 29.4px,#bbb 0 39.2px,#ccc 0 44.1px,#aaa 0 49.0px,#ccc 0 53.9px,#bbb 0 58.8px,#ccc 0 63.7px,#bbb 0 68.6px) 0 9.8px/100% 4.9px no-repeat,linear-gradient(90deg,#fff 0 4.9px,#eee 0 19.6px,#fff 0 24.5px,#eee 0 39.2px,#fff 0 44.1px,#eee 0 49.0px,#fff 0 53.9px,#eee 0 58.8px,#fff 0 68.6px) 0 14.7px/100% 4.9px no-repeat"></div>
<div class="mz " style="left:467px;top:4.5px;width:49.0px;height:19.6px;background:linear-gradient(90deg,#eee 0 39.2px,#ddd 0 44.1px,#eee 0 49.0px) 0 0.0px/100% 4.9px no-repeat,linear-gradient(90deg,#bbb 0 9.8px,#aaa 0 14.7px,#999 0 19.6px,#aaa 0 29.4px,#bbb 0 39.2px,#777 0 44.1px,#bbb 0 49.0px) 0 4.9px/100% 4.9px no-repeat,linear-gradient(90deg,#ccc 0 4.9px,#bbb 0 19.6px,#777 0 24.5px,#aaa 0 29.4px,#ccc 0 39.2px,#888 0 44.1px,#bbb 0 49.0px) 0 9.8px/100% 4.9px no-repeat,linear-gradient(90deg,#fff 0 4.9px,#eee 0 34.3px,#fff 0 39.2px,#eee 0 44.1px,#fff 0 49.0px) 0 14.7px/100% 4.9px no-repeat"></div>
<span class="c" style="left:779px">1/5</span><span class="c" style="left:847.5px">6/7</span><span class="c" style="left:931.5px">-</span>
<span class="c" style="left:1390.5px">07.09.2018</span>
<i class="lg" style="background:#ff80ab"></i>
</div>
<div class="row" style="top:920.81px">
<svg class="ric" viewBox="0 0 16 16"><use href="#usr"/></svg>
<i class="cv" style="left:42px;width:171px"></i><i class="cv" style="left:355px;width:264px"></i>
<div class="mz " style="left:51px;top:4.5px;width:83.3px;height:19.6px;background:linear-gradient(90deg,#eee 0 9.8px,#ddd 0 14.7px,#eee 0 29.4px,#ddd 0 34.3px,#eee 0 49.0px,#fff 0 53.9px,#eee 0 83.3px) 0 0.0px/100% 4.9px no-repeat,linear-gradient(90deg,#bbb 0 9.8px,#888 0 14.7px,#aaa 0 29.4px,#777 0 34.3px,#aaa 0 39.2px,#bbb 0 49.0px,#eee 0 53.9px,#999 0 63.7px,#aaa 0 68.6px,#bbb 0 78.4px,#ddd 0 83.3px) 0 4.9px/100% 4.9px no-repeat,linear-gradient(90deg,#ccc 0 9.8px,#888 0 14.7px,#bbb 0 19.6px,#aaa 0 29.4px,#888 0 34.3px,#ccc 0 39.2px,#bbb 0 44.1px,#ccc 0 49.0px,#eee 0 53.9px,#aaa 0 63.7px,#bbb 0 68.6px,#ccc 0 73.5px,#bbb 0 78.4px,#ccc 0 83.3px) 0 9.8px/100% 4.9px no-repeat,linear-gradient(90deg,#eee 0 34.3px,#fff 0 53.9px,#eee 0 78.4px,#fff 0 83.3px) 0 14.7px/100% 4.9px no-repeat"></div>
<div class="mz " style="left:362px;top:4.5px;width:68.6px;height:19.6px;background:linear-gradient(90deg,#fff 0 4.9px,#eee 0 19.6px,#ddd 0 24.5px,#eee 0 68.6px) 0 0.0px/100% 4.9px no-repeat,linear-gradient(90deg,#ccc 0 4.9px,#aaa 0 9.8px,#ccc 0 14.7px,#999 0 19.6px,#888 0 24.5px,#999 0 29.4px,#bbb 0 44.1px,#aaa 0 49.0px,#999 0 58.8px,#ccc 0 63.7px,#ddd 0 68.6px) 0 4.9px/100% 4.9px no-repeat,linear-gradient(90deg,#ddd 0 4.9px,#ccc 0 9.8px,#bbb 0 19.6px,#aaa 0 24.5px,#bbb 0 29.4px,#aaa 0 34.3px,#ccc 0 39.2px,#bbb 0 53.9px,#aaa 0 58.8px,#ccc 0 63.7px,#ddd 0 68.6px) 0 9.8px/100% 4.9px no-repeat,linear-gradient(90deg,#fff 0 4.9px,#eee 0 34.3px,#fff 0 39.2px,#eee 0 63.7px,#fff 0 68.6px) 0 14.7px/100% 4.9px no-repeat"></div>
<div class="mz " style="left:467px;top:4.5px;width:83.3px;height:19.6px;background:linear-gradient(90deg,#eee 0 29.4px,#fff 0 34.3px,#eee 0 58.8px,#fff 0 63.7px,#eee 0 83.3px) 0 0.0px/100% 4.9px no-repeat,linear-gradient(90deg,#bbb 0 4.9px,#aaa 0 9.8px,#bbb 0 24.5px,#aaa 0 29.4px,#eee 0 34.3px,#bbb 0 39.2px,#ccc 0 44.1px,#aaa 0 53.9px,#888 0 58.8px,#eee 0 63.7px,#bbb 0 68.6px,#aaa 0 78.4px,#ccc 0 83.3px) 0 4.9px/100% 4.9px no-repeat,linear-gradient(90deg,#ccc 0 4.9px,#aaa 0 9.8px,#ddd 0 14.7px,#ccc 0 19.6px,#aaa 0 24.5px,#bbb 0 29.4px,#eee 0 34.3px,#bbb 0 39.2px,#ccc 0 53.9px,#999 0 58.8px,#eee 0 63.7px,#ccc 0 68.6px,#bbb 0 73.5px,#ccc 0 78.4px,#ddd 0 83.3px) 0 9.8px/100% 4.9px no-repeat,linear-gradient(90deg,#fff 0 4.9px,#eee 0 9.8px,#fff 0 14.7px,#eee 0 19.6px,#fff 0 24.5px,#eee 0 29.4px,#fff 0 44.1px,#eee 0 58.8px,#fff 0 63.7px,#eee 0 68.6px,#fff 0 73.5px,#eee 0 78.4px,#fff 0 83.3px) 0 14.7px/100% 4.9px no-repeat"></div>
<span class="c" style="left:779px">0/5</span><span class="c" style="left:847.5px">4/7</span><span class="c" style="left:931.5px">-</span>
</div>
<div class="row" style="top:951.48px">
<svg class="ric" viewBox="0 0 16 16"><use href="#usr"/></svg>
<i class="cv" style="left:42px;width:171px"></i><i class="cv" style="left:355px;width:264px"></i>
<div class="mz " style="left:51px;top:4.5px;width:83.3px;height:19.6px;background:linear-gradient(90deg,#eee 0 9.8px,#ddd 0 19.6px,#eee 0 39.2px,#fff 0 44.1px,#eee 0 83.3px) 0 0.0px/100% 4.9px no-repeat,linear-gradient(90deg,#ccc 0 4.9px,#aaa 0 9.8px,#777 0 14.7px,#666 0 19.6px,#aaa 0 24.5px,#bbb 0 34.3px,#aaa 0 39.2px,#eee 0 44.1px,#bbb 0 58.8px,#aaa 0 68.6px,#bbb 0 78.4px,#ddd 0 83.3px) 0 4.9px/100% 4.9px no-repeat,linear-gradient(90deg,#ccc 0 4.9px,#bbb 0 9.8px,#888 0 14.7px,#999 0 19.6px,#ccc 0 24.5px,#bbb 0 29.4px,#ccc 0 34.3px,#bbb 0 39.2px,#eee 0 44.1px,#ccc 0 49.0px,#bbb 0 58.8px,#ccc 0 68.6px,#bbb 0 73.5px,#ccc 0 83.3px) 0 9.8px/100% 4.9px no-repeat,linear-gradient(90deg,#fff 0 9.8px,#eee 0 24.5px,#fff 0 49.0px,#eee 0 58.8px,#fff 0 63.7px,#eee 0 68.6px,#fff 0 83.3px) 0 14.7px/100% 4.9px no-repeat"></div>
<div class="mz " style="left:362px;top:4.5px;width:68.6px;height:19.6px;background:linear-gradient(90deg,#eee 0 34.3px,#ddd 0 39.2px,#eee 0 63.7px,#fff 0 68.6px) 0 0.0px/100% 4.9px no-repeat,linear-gradient(90deg,#bbb 0 4.9px,#aaa 0 9.8px,#bbb 0 14.7px,#888 0 19.6px,#bbb 0 24.5px,#ccc 0 29.4px,#aaa 0 34.3px,#999 0 44.1px,#aaa 0 49.0px,#bbb 0 53.9px,#ccc 0 58.8px,#999 0 63.7px,#ccc 0 68.6px) 0 4.9px/100% 4.9px no-repeat,linear-gradient(90deg,#ddd 0 4.9px,#bbb 0 9.8px,#ccc 0 14.7px,#aaa 0 24.5px,#ccc 0 29.4px,#aaa 0 34.3px,#888 0 39.2px,#aaa 0 53.9px,#ccc 0 58.8px,#bbb 0 63.7px,#ddd 0 68.6px) 0 9.8px/100% 4.9px no-repeat,linear-gradient(90deg,#fff 0 4.9px,#eee 0 24.5px,#fff 0 34.3px,#eee 0 53.9px,#fff 0 58.8px,#eee 0 63.7px,#fff 0 68.6px) 0 14.7px/100% 4.9px no-repeat"></div>
<div class="mz " style="left:467px;top:4.5px;width:83.3px;height:19.6px;background:linear-gradient(90deg,#fff 0 4.9px,#eee 0 19.6px,#fff 0 24.5px,#eee 0 44.1px,#fff 0 49.0px,#eee 0 68.6px,#ddd 0 73.5px,#eee 0 78.4px,#fff 0 83.3px) 0 0.0px/100% 4.9px no-repeat,linear-gradient(90deg,#ddd 0 4.9px,#aaa 0 9.8px,#999 0 19.6px,#eee 0 24.5px,#999 0 34.3px,#aaa 0 44.1px,#eee 0 49.0px,#999 0 53.9px,#888 0 58.8px,#ccc 0 63.7px,#bbb 0 68.6px,#999 0 78.4px,#ccc 0 83.3px) 0 4.9px/100% 4.9px no-repeat,linear-gradient(90deg,#ddd 0 4.9px,#bbb 0 9.8px,#ccc 0 14.7px,#aaa 0 19.6px,#eee 0 24.5px,#bbb 0 29.4px,#ccc 0 39.2px,#aaa 0 44.1px,#eee 0 49.0px,#ccc 0 53.9px,#999 0 58.8px,#bbb 0 63.7px,#aaa 0 68.6px,#999 0 73.5px,#aaa 0 78.4px,#ddd 0 83.3px) 0 9.8px/100% 4.9px no-repeat,linear-gradient(90deg,#fff 0 9.8px,#eee 0 19.6px,#fff 0 24.5px,#eee 0 34.3px,#fff 0 39.2px,#eee 0 44.1px,#fff 0 53.9px,#eee 0 73.5px,#fff 0 83.3px) 0 14.7px/100% 4.9px no-repeat"></div>
<span class="c" style="left:779px">0/5</span><span class="c" style="left:847.5px">4/7</span><span class="c" style="left:931.5px">-</span>
</div>
<div class="row" style="top:982.15px">
<svg class="ric" viewBox="0 0 16 16"><use href="#usr"/></svg>
<i class="cv" style="left:42px;width:171px"></i><i class="cv" style="left:355px;width:264px"></i>
<div class="mz " style="left:51px;top:4.5px;width:63.7px;height:19.6px;background:linear-gradient(90deg,#fff 0 4.9px,#eee 0 34.3px,#ddd 0 39.2px,#eee 0 63.7px) 0 0.0px/100% 4.9px no-repeat,linear-gradient(90deg,#ddd 0 4.9px,#bbb 0 9.8px,#aaa 0 14.7px,#bbb 0 34.3px,#666 0 39.2px,#888 0 44.1px,#999 0 49.0px,#888 0 53.9px,#aaa 0 58.8px,#ddd 0 63.7px) 0 4.9px/100% 4.9px no-repeat,linear-gradient(90deg,#ddd 0 4.9px,#bbb 0 19.6px,#aaa 0 24.5px,#ccc 0 29.4px,#bbb 0 34.3px,#aaa 0 39.2px,#bbb 0 44.1px,#888 0 49.0px,#bbb 0 58.8px,#ddd 0 63.7px) 0 9.8px/100% 4.9px no-repeat,linear-gradient(90deg,#fff 0 14.7px,#eee 0 19.6px,#fff 0 34.3px,#eee 0 58.8px,#fff 0 63.7px) 0 14.7px/100% 4.9px no-repeat"></div>
<div class="mz " style="left:362px;top:4.5px;width:68.6px;height:19.6px;background:linear-gradient(90deg,#fff 0 4.9px,#eee 0 68.6px) 0 0.0px/100% 4.9px no-repeat,linear-gradient(90deg,#ddd 0 4.9px,#bbb 0 9.8px,#999 0 19.6px,#bbb 0 24.5px,#aaa 0 29.4px,#bbb 0 34.3px,#aaa 0 39.2px,#bbb 0 44.1px,#999 0 49.0px,#888 0 53.9px,#777 0 58.8px,#bbb 0 63.7px,#ccc 0 68.6px) 0 4.9px/100% 4.9px no-repeat,linear-gradient(90deg,#eee 0 4.9px,#bbb 0 9.8px,#ccc 0 14.7px,#bbb 0 19.6px,#ccc 0 29.4px,#bbb 0 34.3px,#aaa 0 39.2px,#ccc 0 44.1px,#bbb 0 49.0px,#aaa 0 63.7px,#ddd 0 68.6px) 0 9.8px/100% 4.9px no-repeat,linear-gradient(90deg,#fff 0 4.9px,#eee 0 63.7px,#fff 0 68.6px) 0 14.7px/100% 4.9px no-repeat"></div>
<div class="mz " style="left:467px;top:4.5px;width:58.8px;height:19.6px;background:linear-gradient(90deg,#eee 0 19.6px,#ddd 0 24.5px,#eee 0 58.8px) 0 0.0px/100% 4.9px no-repeat,linear-gradient(90deg,#ccc 0 4.9px,#999 0 9.8px,#aaa 0 14.7px,#ccc 0 19.6px,#888 0 24.5px,#aaa 0 34.3px,#999 0 39.2px,#bbb 0 58.8px) 0 4.9px/100% 4.9px no-repeat,linear-gradient(90deg,#ccc 0 4.9px,#bbb 0 14.7px,#ccc 0 19.6px,#999 0 24.5px,#bbb 0 29.4px,#ccc 0 34.3px,#aaa 0 39.2px,#ccc 0 49.0px,#bbb 0 53.9px,#ccc 0 58.8px) 0 9.8px/100% 4.9px no-repeat,linear-gradient(90deg,#fff 0 4.9px,#eee 0 9.8px,#fff 0 14.7px,#eee 0 24.5px,#fff 0 29.4px,#eee 0 34.3px,#fff 0 39.2px,#eee 0 53.9px,#fff 0 58.8px) 0 14.7px/100% 4.9px no-repeat"></div>
<span class="c" style="left:779px">0/5</span><span class="c" style="left:847.5px">5/7</span><span class="c" style="left:931.5px">-</span>
<span class="c" style="left:1390.5px">10.09.2018</span>
</div>
<div class="row" style="top:1012.82px">
<svg class="ric" viewBox="0 0 16 16"><use href="#usr"/></svg>
<i class="cv" style="left:42px;width:171px"></i><i class="cv" style="left:355px;width:264px"></i>
<div class="mz " style="left:51px;top:4.5px;width:63.7px;height:19.6px;background:linear-gradient(90deg,#eee 0 19.6px,#ddd 0 24.5px,#eee 0 63.7px) 0 0.0px/100% 4.9px no-repeat,linear-gradient(90deg,#aaa 0 19.6px,#999 0 24.5px,#bbb 0 29.4px,#aaa 0 34.3px,#999 0 39.2px,#bbb 0 44.1px,#999 0 49.0px,#aaa 0 53.9px,#ccc 0 58.8px,#ddd 0 63.7px) 0 4.9px/100% 4.9px no-repeat,linear-gradient(90deg,#bbb 0 9.8px,#aaa 0 19.6px,#999 0 24.5px,#aaa 0 29.4px,#bbb 0 34.3px,#ccc 0 39.2px,#aaa 0 44.1px,#bbb 0 49.0px,#ccc 0 53.9px,#bbb 0 58.8px,#ddd 0 63.7px) 0 9.8px/100% 4.9px no-repeat,linear-gradient(90deg,#eee 0 58.8px,#fff 0 63.7px) 0 14.7px/100% 4.9px no-repeat"></div>
<div class="mz " style="left:362px;top:4.5px;width:68.6px;height:19.6px;background:linear-gradient(90deg,#fff 0 4.9px,#eee 0 68.6px) 0 0.0px/100% 4.9px no-repeat,linear-gradient(90deg,#ddd 0 4.9px,#bbb 0 9.8px,#aaa 0 14.7px,#999 0 19.6px,#aaa 0 24.5px,#bbb 0 29.4px,#ccc 0 34.3px,#aaa 0 39.2px,#bbb 0 49.0px,#666 0 53.9px,#777 0 58.8px,#aaa 0 63.7px,#ddd 0 68.6px) 0 4.9px/100% 4.9px no-repeat,linear-gradient(90deg,#ddd 0 4.9px,#bbb 0 14.7px,#aaa 0 19.6px,#bbb 0 24.5px,#ccc 0 34.3px,#bbb 0 39.2px,#ccc 0 44.1px,#aaa 0 49.0px,#999 0 53.9px,#777 0 58.8px,#ccc 0 63.7px,#ddd 0 68.6px) 0 9.8px/100% 4.9px no-repeat,linear-gradient(90deg,#fff 0 4.9px,#eee 0 24.5px,#fff 0 34.3px,#eee 0 44.1px,#fff 0 49.0px,#eee 0 58.8px,#fff 0 68.6px) 0 14.7px/100% 4.9px no-repeat"></div>
<div class="mz " style="left:467px;top:4.5px;width:58.8px;height:19.6px;background:linear-gradient(90deg,#fff 0 4.9px,#eee 0 53.9px,#fff 0 58.8px) 0 0.0px/100% 4.9px no-repeat,linear-gradient(90deg,#ccc 0 4.9px,#999 0 14.7px,#bbb 0 29.4px,#999 0 34.3px,#bbb 0 44.1px,#666 0 49.0px,#999 0 53.9px,#ccc 0 58.8px) 0 4.9px/100% 4.9px no-repeat,linear-gradient(90deg,#ccc 0 4.9px,#aaa 0 14.7px,#ccc 0 19.6px,#aaa 0 24.5px,#ccc 0 29.4px,#bbb 0 39.2px,#ccc 0 44.1px,#888 0 49.0px,#bbb 0 53.9px,#ccc 0 58.8px) 0 9.8px/100% 4.9px no-repeat,linear-gradient(90deg,#fff 0 4.9px,#eee 0 29.4px,#fff 0 39.2px,#eee 0 53.9px,#fff 0 58.8px) 0 14.7px/100% 4.9px no-repeat"></div>
<span class="c" style="left:779px">0/5</span><span class="c" style="left:847.5px">4/7</span><span class="c" style="left:931.5px">-</span>
</div>
</div>

<div class="gh">
<div class="hc" style="left:0;width:40.5px"></div>
<div class="hc s" style="left:40.5px;width:311.5px"><span>Navn</span><svg style="left:283px;top:7px;width:14px;height:18px" viewBox="0 0 14 18"><path d="M7 16.5V2M2.5 6.5L7 2l4.5 4.5" fill="none" stroke="#aaa" stroke-width="1.1"/></svg></div>
<div class="hc" style="left:352px;width:104.5px"><span>Brugernum…</span></div>
<div class="hc s" style="left:456.5px;width:311.5px;border-right-color:#eef6fd"><span>Firma</span><svg style="left:283px;top:7px;width:14px;height:18px" viewBox="0 0 14 18"><path d="M7 16.5V2M2.5 6.5L7 2l4.5 4.5" fill="none" stroke="#aaa" stroke-width="1.1"/></svg></div>
<div class="hc" style="left:768px;width:69px"><span>Admin</span></div>
<div class="hc" style="left:837px;width:84px"><span>Modulv…</span></div>
<div class="hc" style="left:921px;width:312px"><span>Gældende abonnement</span></div>
<div class="hc" style="left:1233px;width:147px"><span>Deadline for adgang</span></div>
<div class="hc" style="left:1380px;width:126px"><span>Seneste login</span></div>
<div class="hc" style="left:1506px;width:143px;border-right:0"><span>#Link group</span></div>
</div>

<!-- grid scrollbar -->
<div class="sbt" style="left:1632px;top:121px;width:17px;height:825px"></div>
<div class="sbh" style="left:1633.2px;top:156.2px;width:14.5px;height:698.5px"></div>
<svg style="left:1634px;top:138px;width:14px;height:10px" viewBox="0 0 14 10"><path d="M1.5 8L7 2.5 12.5 8" fill="none" stroke="#555" stroke-width="2.4"/></svg>
<svg style="left:1634px;top:918px;width:14px;height:10px" viewBox="0 0 14 10"><path d="M1.5 2L7 7.5 12.5 2" fill="none" stroke="#555" stroke-width="2.4"/></svg>
</div>

<!-- popup window -->
<div id="pop">
<svg style="left:5.500px;top:3.800px;width:20px;height:20px" viewBox="0 0 20 20"><use href="#iee"/></svg>
<span id="pttl">Tilføj bruger - Internet Explorer</span>
<svg style="left:405px;top:4.2px;width:120px;height:20px" viewBox="0 0 120 20"><g fill="none" stroke="#111" stroke-width="1.1"><path d="M9.5 10.3h10"/><path d="M54.5 5.5h9.5v9.5h-9.5z"/><path d="M100.5 5l10 10M110.5 5l-10 10"/></g></svg>
<div id="paddr">
<svg style="left:2.600px;top:2.600px;width:16px;height:16px" viewBox="0 0 16 16"><use href="#bw"/></svg>
<span class="url"><b>https</b><u>://www.</u><b>byggeweb.dk</b>/controller</span>
<svg style="left:442.5px;top:6px;width:10.2px;height:12px" viewBox="0 0 10.2 12"><use href="#lock"/></svg>
<span class="rib">RIB A/S [DK]</span>
</div>
<div id="pbh"><span>Tilføj bruger</span></div>
<span id="psub">Vælg en oprettet Byggeweb-bruger</span>
<div id="pin"><i style="left:1.5px;top:4px;width:1px;height:20px;background:#000"></i></div>
<div id="pbtn">Tilføj</div>
<div id="phelp"><span>Søg efter Brugernummer (UN), Bruger e-mail, Navn eller Firmanummer (CN)</span></div>
<div id="psb" class="sbt">
<div class="sbh" style="left:1px;top:34px;width:15px;height:15px"></div>
<svg style="left:2px;top:17px;width:13px;height:9px" viewBox="0 0 14 10"><path d="M1.5 8L7 2.5 12.5 8" fill="none" stroke="#555" stroke-width="2.2"/></svg>
<svg style="left:2px;top:234px;width:13px;height:9px" viewBox="0 0 14 10"><path d="M1.5 2L7 7.5 12.5 2" fill="none" stroke="#555" stroke-width="2.2"/></svg>
</div>
</div>

<!-- red annotations -->
<svg id="ann" viewBox="0 0 1920 1040">
<defs><filter id="sh" x="-20%" y="-20%" width="140%" height="140%"><feDropShadow dx="2.5" dy="2.5" stdDeviation="1.6" flood-color="#000" flood-opacity=".45"/></filter></defs>
<g fill="none" stroke="#f00" stroke-width="2">
<rect x="279" y="139" width="35" height="37"/>
<rect x="19" y="333.2" width="108" height="24.8"/>
<rect x="66.5" y="961.5" width="133.5" height="24"/>
<rect x="462.100" y="397" width="491.200" height="160.300"/>
</g>
<g filter="url(#sh)"><path d="M139.0 960.0L72.7 372.7" stroke="#f00" stroke-width="1.6" fill="none"/><path d="M71.5 361.3L76.6 372.3L68.9 373.2z" fill="#f00"/><path d="M120.0 327.4L265.7 171.9" stroke="#f00" stroke-width="1.6" fill="none"/><path d="M273.2 163.9L268.7 174.7L262.7 169.1z" fill="#f00"/><path d="M315.6 176.8L459.7 383.3" stroke="#f00" stroke-width="1.6" fill="none"/><path d="M466.0 392.3L456.8 385.3L462.7 381.2z" fill="#f00"/></g>
</svg>
</body>
</html>
